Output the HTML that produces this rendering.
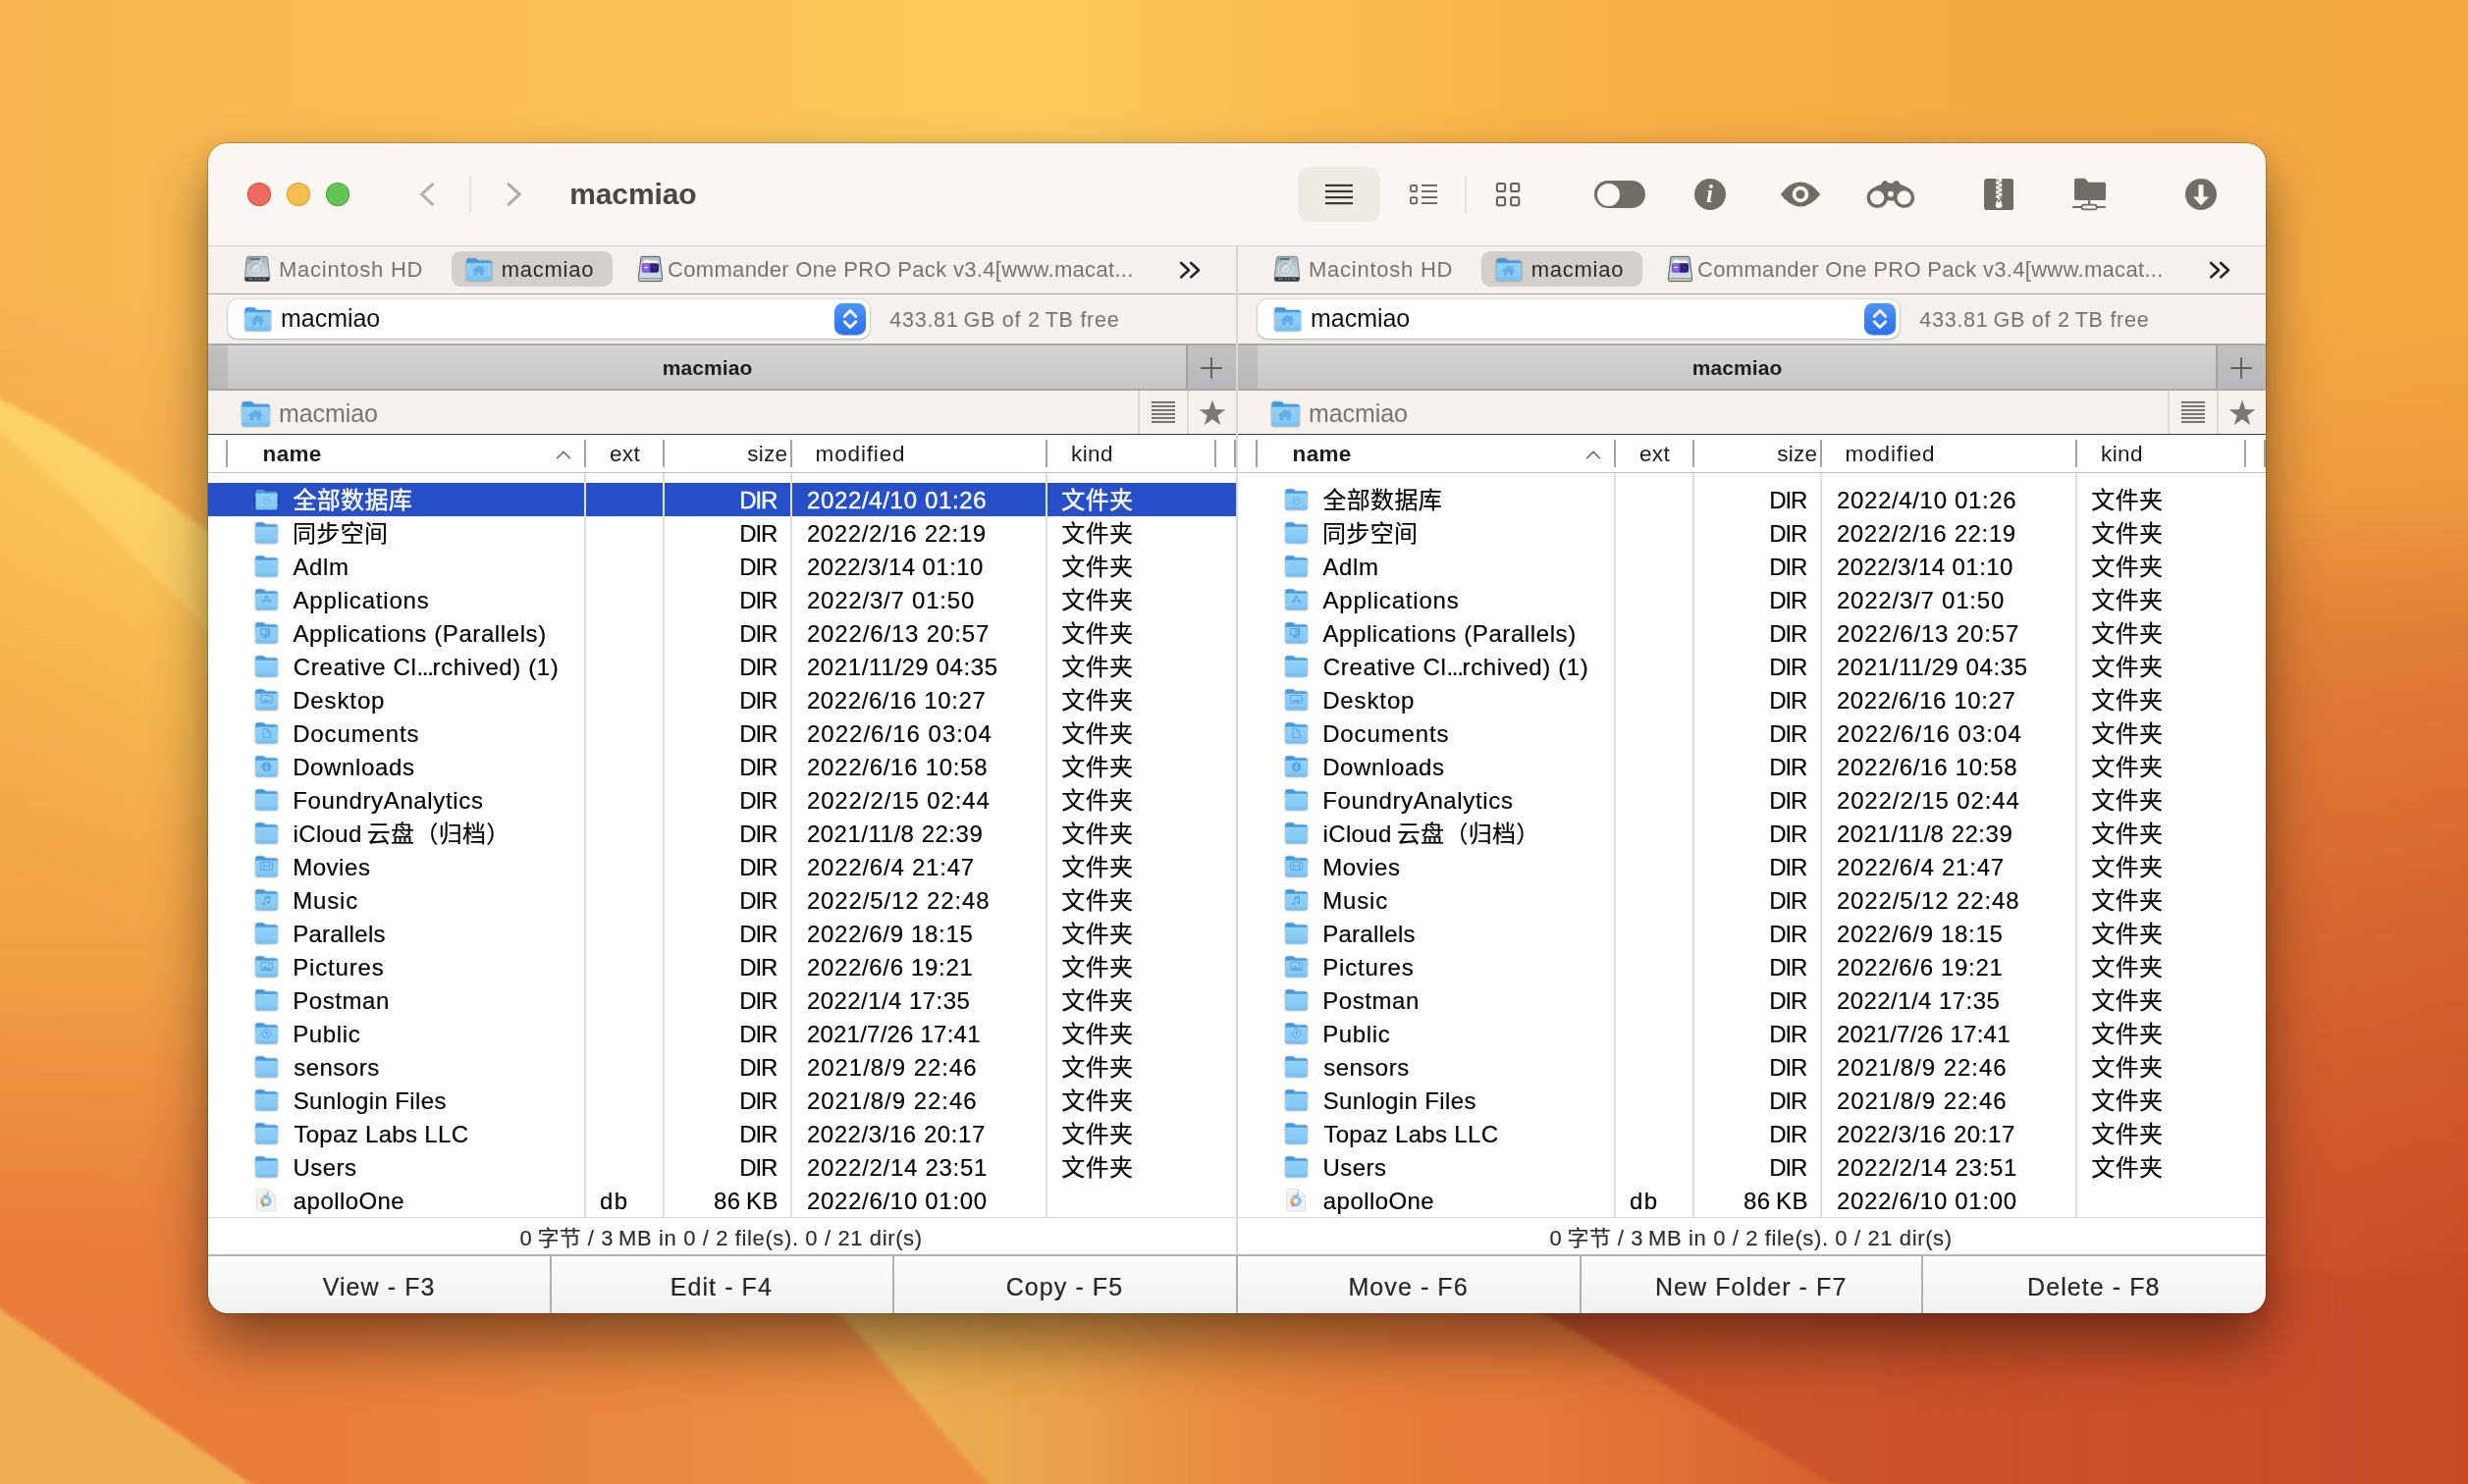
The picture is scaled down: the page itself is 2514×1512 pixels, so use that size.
<!DOCTYPE html>
<html lang="zh-CN"><head><meta charset="utf-8"><title>macmiao</title>
<style>
html,body{margin:0;padding:0;}
body{width:2514px;height:1512px;overflow:hidden;position:relative;background:#e98b3e;
 font-family:"Liberation Sans","Noto Sans CJK SC",sans-serif;}
.b{position:absolute;display:block;}
.t{position:absolute;white-space:nowrap;}
.cj{letter-spacing:0.3px;}
#wall{position:absolute;left:0;top:0;width:2514px;height:1512px;}
#win{position:absolute;left:212px;top:146px;width:2096px;height:1192px;border-radius:20px;
 box-shadow:0 0 0 1px rgba(0,0,0,0.20),0 34px 60px 0 rgba(0,0,0,0.42),0 4px 20px rgba(0,0,0,0.10);}
#clip{position:absolute;left:0;top:0;width:2514px;height:1512px;
 clip-path:inset(146px 206px 174px 212px round 20px);will-change:transform;}
</style></head><body>

<svg id="wall" width="2514" height="1512" viewBox="0 0 2514 1512">
<defs>
<linearGradient id="gTop" x1="0" y1="0" x2="1" y2="0">
 <stop offset="0" stop-color="#f7b450"/><stop offset="0.2" stop-color="#fbbf55"/><stop offset="0.42" stop-color="#fdc95b"/>
 <stop offset="0.62" stop-color="#f8b349"/><stop offset="0.8" stop-color="#f5ab44"/><stop offset="1" stop-color="#f5a842"/>
</linearGradient>
<linearGradient id="gBot" x1="0" y1="0" x2="1" y2="0">
 <stop offset="0" stop-color="#e97c3a"/><stop offset="0.35" stop-color="#e8813c"/><stop offset="0.62" stop-color="#e67a38"/>
 <stop offset="0.78" stop-color="#d25b2d"/><stop offset="1" stop-color="#ca4b28"/>
</linearGradient>
<linearGradient id="gFade" x1="0" y1="0" x2="0" y2="1">
 <stop offset="0" stop-color="#fff"/><stop offset="0.2" stop-color="#fff"/><stop offset="0.33" stop-color="#d9d9d9"/><stop offset="0.4" stop-color="#9e9e9e"/><stop offset="0.47" stop-color="#787878"/><stop offset="0.6" stop-color="#4d4d4d"/><stop offset="0.8" stop-color="#141414"/><stop offset="0.88" stop-color="#000"/><stop offset="1" stop-color="#000"/>
</linearGradient>
<mask id="mFade"><rect width="2514" height="1512" fill="url(#gFade)"/></mask>
<linearGradient id="gPetal" gradientUnits="userSpaceOnUse" x1="100" y1="470" x2="-110" y2="810">
 <stop offset="0" stop-color="#fccf5e" stop-opacity="0.8"/><stop offset="0.3" stop-color="#fbc657" stop-opacity="0.62"/><stop offset="1" stop-color="#f8b850" stop-opacity="0"/>
</linearGradient>
<linearGradient id="gMid" x1="0" y1="0" x2="1" y2="0">
 <stop offset="0" stop-color="#ecb856" stop-opacity="1"/><stop offset="0.4" stop-color="#ebaa4d" stop-opacity="0.8"/><stop offset="1" stop-color="#e8813c" stop-opacity="0"/>
</linearGradient>
<linearGradient id="gRed" x1="0" y1="0" x2="1" y2="0">
 <stop offset="0" stop-color="#c9532b" stop-opacity="0.9"/><stop offset="0.5" stop-color="#c64c28" stop-opacity="0.6"/><stop offset="1" stop-color="#c44827" stop-opacity="0.2"/>
</linearGradient>
<linearGradient id="gLeft" x1="0" y1="0" x2="0" y2="1">
 <stop offset="0" stop-color="#f6b24d" stop-opacity="0.75"/><stop offset="0.4" stop-color="#f4ad4a" stop-opacity="0.82"/><stop offset="0.65" stop-color="#f2a647" stop-opacity="0.8"/><stop offset="1" stop-color="#ee9442" stop-opacity="0"/>
</linearGradient>
<linearGradient id="gLeftX" x1="0" y1="0" x2="1" y2="0"><stop offset="0" stop-color="#fff"/><stop offset="0.45" stop-color="#fff"/><stop offset="1" stop-color="#000"/></linearGradient>
<mask id="mLeft"><rect x="0" y="400" width="520" height="900" fill="url(#gLeftX)"/></mask>
<linearGradient id="gMidL" gradientUnits="userSpaceOnUse" x1="330" y1="0" x2="960" y2="0">
 <stop offset="0" stop-color="#ee9846" stop-opacity="0"/><stop offset="1" stop-color="#ee9846" stop-opacity="0.6"/>
</linearGradient>
<filter id="bl2"><feGaussianBlur stdDeviation="2"/></filter>
</defs>
<rect width="2514" height="1512" fill="url(#gBot)"/>
<rect width="2514" height="1512" fill="url(#gTop)" mask="url(#mFade)"/>
<rect x="0" y="480" width="520" height="780" fill="url(#gLeft)" mask="url(#mLeft)"/>
<path d="M-10,402 Q106,456 240,564 L240,1100 L-10,1100 Z" fill="url(#gPetal)" filter="url(#bl2)"/>
<path d="M-10,403 Q106,457 240,565 L240,672 Q110,534 -10,430 Z" fill="#fee27a" fill-opacity="0.36" filter="url(#bl2)"/>
<polygon points="-10,1329 262,1519 -10,1519" fill="#f0ae51" filter="url(#bl2)"/>
<polygon points="-10,1327 262,1517 262,1521 -10,1331" fill="#f6c068" fill-opacity="0.7" filter="url(#bl2)"/>
<polygon points="330,1296 820,1296 1012,1520 330,1520" fill="url(#gMidL)"/>
<polygon points="820,1296 1012,1520 1500,1520 1380,1296" fill="url(#gMid)" filter="url(#bl2)"/>
<polygon points="1500,1296 1880,1520 2524,1520 2524,1296" fill="url(#gRed)" filter="url(#bl2)"/>
</svg>

<div id="win"></div><div id="clip">
<div class="b" style="left:212px;top:146px;width:2096px;height:1192px;background:#fff;"></div>
<div class="b" style="left:212px;top:146px;width:2096px;height:104px;background:#faf7f2;border-radius:20px 20px 0 0;box-shadow:inset 0 1.2px 0 rgba(255,255,255,0.95);"></div>
<div class="b" style="left:212px;top:250px;width:2096px;height:1px;background:#d6d2cd;"></div>
<div class="b" style="left:252px;top:186px;width:24px;height:24px;border-radius:50%;background:#ed6a5e;box-shadow:inset 0 0 0 1px #d5544a;"></div>
<div class="b" style="left:292px;top:186px;width:24px;height:24px;border-radius:50%;background:#f5bf4f;box-shadow:inset 0 0 0 1px #d9a33c;"></div>
<div class="b" style="left:332px;top:186px;width:24px;height:24px;border-radius:50%;background:#62c554;box-shadow:inset 0 0 0 1px #4fa943;"></div>
<svg class="b" style="left:424px;top:182px;" width="24" height="32" viewBox="0 0 24 32" preserveAspectRatio="none"><path d="M17.6 4.9 L5.6 16 L17.6 27.1" fill="none" stroke="#b4b0aa" stroke-width="3" stroke-linejoin="miter"/></svg>
<div class="b" style="left:477.6px;top:178px;width:2px;height:39px;background:#e7e3dd;"></div>
<svg class="b" style="left:511px;top:182px;" width="24" height="32" viewBox="0 0 24 32" preserveAspectRatio="none"><path d="M6.2 4.9 L18.2 16 L6.2 27.1" fill="none" stroke="#aeaaa4" stroke-width="3" stroke-linejoin="miter"/></svg>
<div class="t" style="top:177.70px;font-size:30px;line-height:39px;color:#494744;letter-spacing:-0.1px;font-weight:700;left:580.20px;">macmiao</div>
<div class="b" style="left:1322px;top:170px;width:84px;height:56px;border-radius:13px;background:#eeeae4;"></div>
<svg class="b" style="left:1348px;top:184px;" width="32" height="28" viewBox="0 0 32 28" preserveAspectRatio="none"><rect x="2" y="3.80" width="28" height="2.2" fill="#3a3835"/><rect x="2" y="9.90" width="28" height="2.2" fill="#3a3835"/><rect x="2" y="16.00" width="28" height="2.2" fill="#3a3835"/><rect x="2" y="22.00" width="28" height="2.2" fill="#3a3835"/></svg>
<svg class="b" style="left:1435px;top:184px;" width="32" height="28" viewBox="0 0 32 28" preserveAspectRatio="none"><rect x="13" y="4.00" width="16" height="1.8" fill="#625d56"/><rect x="13" y="10.10" width="16" height="1.8" fill="#625d56"/><rect x="13" y="16.20" width="16" height="1.8" fill="#625d56"/><rect x="13" y="22.20" width="16" height="1.8" fill="#625d56"/><rect x="1.9" y="4.9" width="6.3" height="6.3" rx="1.5" fill="none" stroke="#625d56" stroke-width="1.7"/><rect x="1.9" y="17.1" width="6.3" height="6.3" rx="1.5" fill="none" stroke="#625d56" stroke-width="1.7"/></svg>
<div class="b" style="left:1492px;top:178px;width:2px;height:39px;background:#e6e2dc;"></div>
<svg class="b" style="left:1523px;top:185px;" width="26" height="26" viewBox="0 0 26 26" preserveAspectRatio="none"><rect x="1.9" y="1.9" width="8.2" height="8.2" rx="1.8" fill="none" stroke="#625d56" stroke-width="2"/><rect x="1.9" y="16.1" width="8.2" height="8.2" rx="1.8" fill="none" stroke="#625d56" stroke-width="2"/><rect x="16.1" y="1.9" width="8.2" height="8.2" rx="1.8" fill="none" stroke="#625d56" stroke-width="2"/><rect x="16.1" y="16.1" width="8.2" height="8.2" rx="1.8" fill="none" stroke="#625d56" stroke-width="2"/></svg>
<div class="b" style="left:1624px;top:184px;width:52px;height:28px;border-radius:14px;background:#716c66;"></div>
<div class="b" style="left:1626.5px;top:186.5px;width:23px;height:23px;border-radius:50%;background:#faf7f2;"></div>
<div class="b" style="left:1726px;top:182px;width:32px;height:32px;border-radius:50%;background:#716c66;"></div>
<div class="t" style="left:1725.6px;top:181.6px;width:32px;text-align:center;font-family:'Liberation Serif',serif;font-style:italic;font-weight:700;font-size:25px;line-height:32px;color:#faf7f2;">i</div>
<svg class="b" style="left:1812px;top:184px;" width="44" height="28" viewBox="0 0 44 28" preserveAspectRatio="none"><path d="M1.8 14 Q11 1.6 22 1.6 Q33 1.6 42.2 14 Q33 26.4 22 26.4 Q11 26.4 1.8 14 Z" fill="#716c66"/><circle cx="22" cy="14" r="8.3" fill="#faf7f2"/><circle cx="22" cy="14" r="4.5" fill="#716c66"/></svg>
<svg class="b" style="left:1900px;top:182px;" width="52" height="32" viewBox="0 0 52 32" preserveAspectRatio="none"><path d="M20.2 1.9 Q22.8 1.9 23.6 4.6 L28.2 4.6 Q29 1.9 31.6 1.9 Q33.6 1.9 34.6 3.8 L35.8 6 Q44 8 49 15 L41 22.4 L11 22.4 L3 15 Q8 8 16.2 6 L17.4 3.8 Q18.4 1.9 20.2 1.9 Z" fill="#716c66"/><circle cx="12.2" cy="19.4" r="10.6" fill="#716c66"/><circle cx="39.6" cy="19.4" r="10.6" fill="#716c66"/><circle cx="12.2" cy="19.4" r="7.1" fill="#faf7f2"/><circle cx="39.6" cy="19.4" r="7.1" fill="#faf7f2"/><circle cx="25.9" cy="15.7" r="2.9" fill="#faf7f2"/></svg>
<svg class="b" style="left:2020.8px;top:181.8px;" width="30.4" height="32.2" viewBox="0 0 30.4 32.2" preserveAspectRatio="none"><rect x="0" y="0" width="30.4" height="32.2" rx="3.4" fill="#716c66"/><rect x="12.2" y="0" width="6" height="20" fill="#faf7f2"/><rect x="10.8" y="1.2" width="4.2" height="1.3" fill="#716c66"/><rect x="15.4" y="3.5999999999999996" width="4.2" height="1.3" fill="#716c66"/><rect x="10.8" y="6.0" width="4.2" height="1.3" fill="#716c66"/><rect x="15.4" y="8.399999999999999" width="4.2" height="1.3" fill="#716c66"/><rect x="10.8" y="10.799999999999999" width="4.2" height="1.3" fill="#716c66"/><rect x="15.4" y="13.2" width="4.2" height="1.3" fill="#716c66"/><rect x="10.8" y="15.599999999999998" width="4.2" height="1.3" fill="#716c66"/><rect x="15.4" y="18.0" width="4.2" height="1.3" fill="#716c66"/><path d="M15.2 19.4 Q12.6 22 11.8 27 Q11.4 30 15.2 30 Q19 30 18.6 27 Q17.8 22 15.2 19.4 Z" fill="#faf7f2"/><circle cx="15.2" cy="22.8" r="1.3" fill="#716c66"/></svg>
<svg class="b" style="left:2110px;top:181px;" width="36" height="34" viewBox="0 0 36 34" preserveAspectRatio="none"><path d="M3 2.4 Q3 0.8 4.6 0.8 L13 0.8 Q13.8 0.8 14.4 1.4 L17.6 4.8 L33.4 4.8 Q35 4.8 35 6.4 L35 21.4 Q35 23 33.4 23 L4.6 23 Q3 23 3 21.4 Z" fill="#716c66"/><rect x="17" y="23" width="2.2" height="6" fill="#716c66"/><rect x="0.8" y="29" width="34.2" height="2" rx="1" fill="#716c66"/><rect x="10.4" y="27.6" width="15.4" height="4.8" rx="2.4" fill="#faf7f2" stroke="#716c66" stroke-width="1.7"/></svg>
<div class="b" style="left:2226px;top:182px;width:32px;height:32px;border-radius:50%;background:#716c66;"></div>
<svg class="b" style="left:2226px;top:182px;" width="32" height="32" viewBox="0 0 32 32" preserveAspectRatio="none"><path d="M13.5 6.2 H18.5 V18.4 H24.2 L16 27.2 L7.8 18.4 H13.5 Z" fill="#faf7f2"/></svg>
<div class="b" style="left:212px;top:251px;width:1047px;height:48px;background:#f5f2ed;"></div>
<div class="b" style="left:212px;top:299px;width:1047px;height:1px;background:#a9a5a1;"></div>
<svg class="b" style="left:249px;top:260.5px;filter:drop-shadow(0 0.5px 0.5px rgba(0,0,0,0.3));overflow:visible;" width="26" height="26" viewBox="0 0 25.6 25.8" preserveAspectRatio="none"><defs><linearGradient id="hdg30" x1="0" y1="0" x2="0.3" y2="1"><stop offset="0" stop-color="#94a6b1"/><stop offset="0.55" stop-color="#b9c6cd"/><stop offset="1" stop-color="#ccd6da"/></linearGradient></defs><path d="M2.4 1.6 Q2.7 0.4 4 0.4 L21.6 0.4 Q22.9 0.4 23.2 1.6 L25.2 20.6 L25.2 23.4 Q25.2 25.4 23.2 25.4 L2.4 25.4 Q0.4 25.4 0.4 23.4 L0.4 20.6 Z" fill="url(#hdg30)" stroke="#6f7d86" stroke-width="0.7"/><path d="M0.5 21.2 L25.1 21.2 L25.1 23.4 Q25.1 25.3 23.2 25.3 L2.4 25.3 Q0.5 25.3 0.5 23.4 Z" fill="#33383b"/><ellipse cx="11.6" cy="12.6" rx="7.8" ry="7.2" fill="none" stroke="#dde5e9" stroke-width="0.9"/><ellipse cx="11.8" cy="12.8" rx="3.4" ry="3.1" fill="#c9d4da" stroke="#e4ebee" stroke-width="0.7"/><path d="M16.6 3.2 Q16.8 7.4 12.6 9.8 Q8.8 12 7.4 15.2" fill="none" stroke="#e9eef0" stroke-width="1.1"/><rect x="5.4" y="1.9" width="10.4" height="1.9" rx="0.6" fill="#5f6c74"/><rect x="4" y="22.4" width="4.4" height="1.3" fill="#7c868b"/><rect x="10.4" y="22.4" width="2" height="1.3" fill="#7c868b"/><rect x="14" y="22.4" width="2" height="1.3" fill="#7c868b"/><rect x="18" y="22.4" width="3.6" height="1.3" fill="#7c868b"/></svg>
<div class="t" style="top:259.58px;font-size:22px;line-height:29px;color:#767370;letter-spacing:0.75px;left:284.00px;">Macintosh HD</div>
<div class="b" style="left:460px;top:256px;width:164px;height:36px;border-radius:9px;background:#d3cfcb;"></div>
<svg class="b" style="left:475px;top:262.5px;filter:drop-shadow(0 0.9px 0.8px rgba(0,0,0,0.42));overflow:visible;" width="26" height="23.5" viewBox="0 0 23 21" preserveAspectRatio="none"><defs><linearGradient id="f33a" x1="0" y1="0" x2="0" y2="1"><stop offset="0" stop-color="#3c92da"/><stop offset="1" stop-color="#56a8e8"/></linearGradient><linearGradient id="f33b" x1="0" y1="0" x2="0" y2="1"><stop offset="0" stop-color="#8dd0f8"/><stop offset="0.78" stop-color="#86caf5"/><stop offset="0.8" stop-color="#7cc2f0"/><stop offset="1" stop-color="#79bfee"/></linearGradient></defs><path d="M0.4 2 Q0.4 0.4 2 0.4 L7.6 0.4 Q8.6 0.4 9.3 1.2 L10.4 2.5 L21 2.5 Q22.6 2.5 22.6 4.1 L22.6 8 L0.4 8 Z" fill="url(#f33a)"/><path d="M0.4 6 Q0.4 4.9 1.6 4.9 L21.4 4.9 Q22.6 4.9 22.6 6 L22.6 19.2 Q22.6 20.6 21.2 20.6 L1.8 20.6 Q0.4 20.6 0.4 19.2 Z" fill="url(#f33b)"/><path d="M0.4 6 Q0.4 4.9 1.6 4.9 L21.4 4.9 Q22.6 4.9 22.6 6" fill="none" stroke="#a6dcfb" stroke-width="0.5"/><path d="M11.2 6.4 L5 11.7 L6.9 11.7 L6.9 15.7 L9.9 15.7 L9.9 12.9 L12.5 12.9 L12.5 15.7 L15.5 15.7 L15.5 11.7 L17.4 11.7 Z" fill="#64abe7"/><rect x="14" y="7" width="1.4" height="2.6" fill="#64abe7"/></svg>
<div class="t" style="top:259.58px;font-size:22px;line-height:29px;color:#2b2a29;letter-spacing:0.72px;left:510.80px;">macmiao</div>
<svg class="b" style="left:649.5px;top:261px;filter:drop-shadow(0 0.5px 0.5px rgba(0,0,0,0.3));overflow:visible;" width="25" height="26" viewBox="0 0 24.6 25.6" preserveAspectRatio="none"><defs><linearGradient id="cmg35" x1="0" y1="0" x2="0" y2="1"><stop offset="0" stop-color="#aebfca"/><stop offset="1" stop-color="#d6e3e9"/></linearGradient></defs><path d="M2.9 1.2 Q3.1 0.4 4 0.4 L20.6 0.4 Q21.5 0.4 21.7 1.2 L24.2 22 L24.2 23.6 Q24.2 25.2 22.6 25.2 L2 25.2 Q0.4 25.2 0.4 23.6 L0.4 22 Z" fill="url(#cmg35)" stroke="#53575c" stroke-width="0.9"/><path d="M0.9 22.6 L23.7 22.6 L23.7 23.5 Q23.7 24.7 22.5 24.7 L2.1 24.7 Q0.9 24.7 0.9 23.5 Z" fill="#cbc8bc"/><path d="M0.8 22.3 H23.8" stroke="#6a6e72" stroke-width="0.7"/><path d="M5 7.4 Q5 3.4 8.6 3.4 Q10.6 3.4 11.6 4.4 L17.6 4.4 Q19.8 4.4 19.8 7.4 Z" fill="#f4f3fb"/><path d="M3.9 9 Q3.9 7.2 5.7 7.2 L12 7.2 L12 16.4 L5.7 16.4 Q3.9 16.4 3.9 14.6 Z" fill="#7a4fe2"/><path d="M12 7.2 L18.9 7.2 Q20.7 7.2 20.7 9 L20.7 14.6 Q20.7 16.4 18.9 16.4 L12 16.4 Z" fill="#291f6f"/><rect x="5.6" y="10.6" width="4.6" height="1.5" rx="0.4" fill="#e9defd"/><rect x="5.6" y="13.4" width="4.6" height="0.9" fill="#a98af0"/><rect x="5.6" y="8.6" width="4.6" height="0.8" fill="#a98af0"/><rect x="13.8" y="10.8" width="4.8" height="0.9" fill="#4a3fa0"/><rect x="13.8" y="8.8" width="4.8" height="0.7" fill="#3a2f8a"/><rect x="13.8" y="13.2" width="4.8" height="0.7" fill="#3a2f8a"/><rect x="21.2" y="23.1" width="1.6" height="1.2" fill="#74d64f"/></svg>
<div class="t" style="top:259.58px;font-size:22px;line-height:29px;color:#767370;letter-spacing:0.31px;left:680.10px;">Commander One PRO Pack v3.4[www.macat...</div>
<svg class="b" style="left:1198px;top:263px;" width="30" height="24" viewBox="0 0 30 24" preserveAspectRatio="none"><path d="M5.2 5 L13 12.2 L5.2 19.4 M15.2 5 L23 12.2 L15.2 19.4" fill="none" stroke="#222" stroke-width="2.6" stroke-linecap="round" stroke-linejoin="round"/></svg>
<div class="b" style="left:212px;top:300px;width:1047px;height:50px;background:#f5f1ed;"></div>
<div class="b" style="left:232px;top:305px;width:654px;height:40px;border-radius:10px;background:#fff;box-shadow:0 0 0 1px rgba(0,0,0,0.07),0 1px 2.5px rgba(0,0,0,0.22);"></div>
<svg class="b" style="left:249px;top:313px;filter:drop-shadow(0 0.9px 0.8px rgba(0,0,0,0.42));overflow:visible;" width="27.5" height="24.6" viewBox="0 0 23 21" preserveAspectRatio="none"><defs><linearGradient id="f40a" x1="0" y1="0" x2="0" y2="1"><stop offset="0" stop-color="#3c92da"/><stop offset="1" stop-color="#56a8e8"/></linearGradient><linearGradient id="f40b" x1="0" y1="0" x2="0" y2="1"><stop offset="0" stop-color="#8dd0f8"/><stop offset="0.78" stop-color="#86caf5"/><stop offset="0.8" stop-color="#7cc2f0"/><stop offset="1" stop-color="#79bfee"/></linearGradient></defs><path d="M0.4 2 Q0.4 0.4 2 0.4 L7.6 0.4 Q8.6 0.4 9.3 1.2 L10.4 2.5 L21 2.5 Q22.6 2.5 22.6 4.1 L22.6 8 L0.4 8 Z" fill="url(#f40a)"/><path d="M0.4 6 Q0.4 4.9 1.6 4.9 L21.4 4.9 Q22.6 4.9 22.6 6 L22.6 19.2 Q22.6 20.6 21.2 20.6 L1.8 20.6 Q0.4 20.6 0.4 19.2 Z" fill="url(#f40b)"/><path d="M0.4 6 Q0.4 4.9 1.6 4.9 L21.4 4.9 Q22.6 4.9 22.6 6" fill="none" stroke="#a6dcfb" stroke-width="0.5"/><path d="M11.2 6.4 L5 11.7 L6.9 11.7 L6.9 15.7 L9.9 15.7 L9.9 12.9 L12.5 12.9 L12.5 15.7 L15.5 15.7 L15.5 11.7 L17.4 11.7 Z" fill="#64abe7"/><rect x="14" y="7" width="1.4" height="2.6" fill="#64abe7"/></svg>
<div class="t" style="top:308.24px;font-size:25px;line-height:32px;color:#111;letter-spacing:-0.03px;left:286.00px;">macmiao</div>
<div class="b" style="left:850px;top:309px;width:32px;height:32px;border-radius:8.5px;background:linear-gradient(#4d95f9,#2a70ee);box-shadow:0 0.5px 1px rgba(0,0,0,0.3);"></div>
<svg class="b" style="left:850px;top:309px;" width="32" height="32" viewBox="0 0 32 32" preserveAspectRatio="none"><path d="M10.2 13.4 L16 7.6 L21.8 13.4 M10.2 18.8 L16 24.6 L21.8 18.8" fill="none" stroke="#fff" stroke-width="2.8" stroke-linecap="round" stroke-linejoin="round"/></svg>
<div class="t" style="top:311.52px;font-size:21.6px;line-height:28px;color:#767370;letter-spacing:0.7px;left:906.30px;">433.81 GB of 2 TB free</div>
<div class="b" style="left:212px;top:350px;width:1047px;height:48px;background:linear-gradient(#d5d4d6,#c8c7c8);"></div>
<div class="b" style="left:212px;top:350px;width:20px;height:48px;background:linear-gradient(#c2c1c2,#b9b8b9);"></div>
<div class="b" style="left:1208px;top:350px;width:51px;height:48px;background:linear-gradient(#c3c2c3,#b8b7b9);border-left:2px solid #a3a2a3;box-sizing:border-box;"></div>
<div class="b" style="left:212px;top:350px;width:1047px;height:1.6px;background:#aaa9aa;"></div>
<div class="b" style="left:212px;top:396px;width:1047px;height:2px;background:#a8a7a8;"></div>
<svg class="b" style="left:1222px;top:363px;" width="24" height="24" viewBox="0 0 24 24" preserveAspectRatio="none"><path d="M1.2 12 H22.8 M12 1.2 V22.8" stroke="#5f5d60" stroke-width="1.9" fill="none"/></svg>
<div class="t" style="top:360.97px;font-size:21px;line-height:27px;color:#1e1e1e;letter-spacing:0.1px;font-weight:700;left:120.60px;width:1200px;text-align:center;">macmiao</div>
<div class="b" style="left:212px;top:398px;width:1047px;height:44px;background:#f5f1ed;"></div>
<div class="b" style="left:1159.2px;top:398px;width:1.6px;height:44px;background:#dcd7d2;"></div>
<div class="b" style="left:1209.2px;top:398px;width:1.6px;height:44px;background:#dcd7d2;"></div>
<div class="b" style="left:212px;top:441.5px;width:1047px;height:1.5px;background:#3c3c3c;"></div>
<svg class="b" style="left:245.5px;top:409px;filter:drop-shadow(0 0.9px 0.8px rgba(0,0,0,0.42));overflow:visible;" width="29" height="26" viewBox="0 0 23 21" preserveAspectRatio="none"><defs><linearGradient id="f56a" x1="0" y1="0" x2="0" y2="1"><stop offset="0" stop-color="#3c92da"/><stop offset="1" stop-color="#56a8e8"/></linearGradient><linearGradient id="f56b" x1="0" y1="0" x2="0" y2="1"><stop offset="0" stop-color="#8dd0f8"/><stop offset="0.78" stop-color="#86caf5"/><stop offset="0.8" stop-color="#7cc2f0"/><stop offset="1" stop-color="#79bfee"/></linearGradient></defs><path d="M0.4 2 Q0.4 0.4 2 0.4 L7.6 0.4 Q8.6 0.4 9.3 1.2 L10.4 2.5 L21 2.5 Q22.6 2.5 22.6 4.1 L22.6 8 L0.4 8 Z" fill="url(#f56a)"/><path d="M0.4 6 Q0.4 4.9 1.6 4.9 L21.4 4.9 Q22.6 4.9 22.6 6 L22.6 19.2 Q22.6 20.6 21.2 20.6 L1.8 20.6 Q0.4 20.6 0.4 19.2 Z" fill="url(#f56b)"/><path d="M0.4 6 Q0.4 4.9 1.6 4.9 L21.4 4.9 Q22.6 4.9 22.6 6" fill="none" stroke="#a6dcfb" stroke-width="0.5"/><path d="M11.2 6.4 L5 11.7 L6.9 11.7 L6.9 15.7 L9.9 15.7 L9.9 12.9 L12.5 12.9 L12.5 15.7 L15.5 15.7 L15.5 11.7 L17.4 11.7 Z" fill="#64abe7"/><rect x="14" y="7" width="1.4" height="2.6" fill="#64abe7"/></svg>
<div class="t" style="top:405.24px;font-size:25px;line-height:32px;color:#777472;letter-spacing:-0.08px;left:284.00px;">macmiao</div>
<svg class="b" style="left:1173px;top:408px;" width="24" height="24" viewBox="0 0 24 24" preserveAspectRatio="none"><rect x="0" y="0.9" width="24" height="2" fill="#726f6c"/><rect x="0" y="4.9" width="24" height="2" fill="#726f6c"/><rect x="0" y="8.9" width="24" height="2" fill="#726f6c"/><rect x="0" y="12.9" width="24" height="2" fill="#726f6c"/><rect x="0" y="16.9" width="24" height="2" fill="#726f6c"/><rect x="0" y="20.9" width="24" height="2" fill="#726f6c"/></svg>
<svg class="b" style="left:1221px;top:407px;" width="28" height="27" viewBox="0 0 28 27" preserveAspectRatio="none"><path d="M14 0.6 L17.3 10.1 L27.4 10.3 L19.3 16.4 L22.3 26 L14 20.3 L5.7 26 L8.7 16.4 L0.6 10.3 L10.7 10.1 Z" fill="#7b7976"/></svg>
<div class="b" style="left:212px;top:443px;width:1047px;height:38px;background:#fff;"></div>
<div class="b" style="left:212px;top:481px;width:1047px;height:1px;background:#c2c2c2;"></div>
<div class="b" style="left:230px;top:448px;width:1.8px;height:28px;background:#a3a3a3;"></div>
<div class="b" style="left:595px;top:448px;width:1.8px;height:28px;background:#a3a3a3;"></div>
<div class="b" style="left:675px;top:448px;width:1.8px;height:28px;background:#a3a3a3;"></div>
<div class="b" style="left:805px;top:448px;width:1.8px;height:28px;background:#a3a3a3;"></div>
<div class="b" style="left:1065px;top:448px;width:1.8px;height:28px;background:#a3a3a3;"></div>
<div class="b" style="left:1237px;top:448px;width:1.8px;height:28px;background:#a3a3a3;"></div>
<div class="b" style="left:1257px;top:448px;width:1.8px;height:28px;background:#a3a3a3;"></div>
<div class="t" style="top:447.55px;font-size:22.5px;line-height:29px;color:#1c1c1c;letter-spacing:0.3px;font-weight:700;left:267.60px;">name</div>
<svg class="b" style="left:565px;top:457px;" width="18" height="12" viewBox="0 0 18 12" preserveAspectRatio="none"><path d="M2.6 9.8 L9 3.4 L15.4 9.8" fill="none" stroke="#6b6b6b" stroke-width="1.6" stroke-linecap="round" stroke-linejoin="round"/></svg>
<div class="t" style="top:447.55px;font-size:22.5px;line-height:29px;color:#1c1c1c;letter-spacing:0.35px;left:621.00px;">ext</div>
<div class="t" style="top:447.55px;font-size:22.5px;line-height:29px;color:#1c1c1c;letter-spacing:0.3px;right:1711.60px;">size</div>
<div class="t" style="top:447.55px;font-size:22.5px;line-height:29px;color:#1c1c1c;letter-spacing:0.85px;left:830.60px;">modified</div>
<div class="t" style="top:447.55px;font-size:22.5px;line-height:29px;color:#1c1c1c;letter-spacing:0.4px;left:1091.00px;">kind</div>
<div class="b" style="left:212px;top:482px;width:1047px;height:759px;background:#fff;"></div>
<div class="b" style="left:595px;top:482px;width:1.5px;height:758px;background:#dfdfdf;"></div>
<div class="b" style="left:675px;top:482px;width:1.5px;height:758px;background:#dfdfdf;"></div>
<div class="b" style="left:805px;top:482px;width:1.5px;height:758px;background:#dfdfdf;"></div>
<div class="b" style="left:1065px;top:482px;width:1.5px;height:758px;background:#dfdfdf;"></div>
<div class="b" style="left:212px;top:492px;width:1047px;height:34px;background:#264fc8;"></div>
<div class="b" style="left:595px;top:492px;width:1.5px;height:34px;background:#dfe4f4;"></div>
<div class="b" style="left:675px;top:492px;width:1.5px;height:34px;background:#dfe4f4;"></div>
<div class="b" style="left:805px;top:492px;width:1.5px;height:34px;background:#dfe4f4;"></div>
<div class="b" style="left:1065px;top:492px;width:1.5px;height:34px;background:#dfe4f4;"></div>
<svg class="b" style="left:259.7px;top:498.3px;filter:drop-shadow(0 0.9px 0.8px rgba(0,0,0,0.42));overflow:visible;" width="23.0" height="21.9" viewBox="0 0 23 21" preserveAspectRatio="none"><defs><linearGradient id="f85a" x1="0" y1="0" x2="0" y2="1"><stop offset="0" stop-color="#3c92da"/><stop offset="1" stop-color="#56a8e8"/></linearGradient><linearGradient id="f85b" x1="0" y1="0" x2="0" y2="1"><stop offset="0" stop-color="#8dd0f8"/><stop offset="0.78" stop-color="#86caf5"/><stop offset="0.8" stop-color="#7cc2f0"/><stop offset="1" stop-color="#79bfee"/></linearGradient></defs><path d="M0.4 2 Q0.4 0.4 2 0.4 L7.6 0.4 Q8.6 0.4 9.3 1.2 L10.4 2.5 L21 2.5 Q22.6 2.5 22.6 4.1 L22.6 8 L0.4 8 Z" fill="url(#f85a)"/><path d="M0.4 6 Q0.4 4.9 1.6 4.9 L21.4 4.9 Q22.6 4.9 22.6 6 L22.6 19.2 Q22.6 20.6 21.2 20.6 L1.8 20.6 Q0.4 20.6 0.4 19.2 Z" fill="url(#f85b)"/><path d="M0.4 6 Q0.4 4.9 1.6 4.9 L21.4 4.9 Q22.6 4.9 22.6 6" fill="none" stroke="#a6dcfb" stroke-width="0.5"/><path d="M8 12a3.6 3.6 0 1 1 3.6 3.4a2.3 2.3 0 1 1 2.2-2.6" fill="none" stroke="#6db6ea" stroke-width="1"/></svg>
<div class="t" style="top:492.78px;font-size:24px;line-height:34px;color:#fff;letter-spacing:0.35px;left:298.41px;-webkit-text-stroke:0.4px #fff;">全部数据库</div>
<div class="t" style="top:492.78px;font-size:24px;line-height:34px;color:#fff;letter-spacing:-1.1px;right:1722.70px;-webkit-text-stroke:0.4px #fff;">DIR</div>
<div class="t" style="top:492.78px;font-size:24px;line-height:34px;color:#fff;letter-spacing:0.665px;left:821.90px;-webkit-text-stroke:0.4px #fff;">2022/4/10 01:26</div>
<div class="t" style="top:492.78px;font-size:24px;line-height:34px;color:#fff;letter-spacing:0.35px;left:1081.30px;-webkit-text-stroke:0.4px #fff;">文件夹</div>
<svg class="b" style="left:259.7px;top:532.3px;filter:drop-shadow(0 0.9px 0.8px rgba(0,0,0,0.42));overflow:visible;" width="23.0" height="21.9" viewBox="0 0 23 21" preserveAspectRatio="none"><defs><linearGradient id="f90a" x1="0" y1="0" x2="0" y2="1"><stop offset="0" stop-color="#3c92da"/><stop offset="1" stop-color="#56a8e8"/></linearGradient><linearGradient id="f90b" x1="0" y1="0" x2="0" y2="1"><stop offset="0" stop-color="#8dd0f8"/><stop offset="0.78" stop-color="#86caf5"/><stop offset="0.8" stop-color="#7cc2f0"/><stop offset="1" stop-color="#79bfee"/></linearGradient></defs><path d="M0.4 2 Q0.4 0.4 2 0.4 L7.6 0.4 Q8.6 0.4 9.3 1.2 L10.4 2.5 L21 2.5 Q22.6 2.5 22.6 4.1 L22.6 8 L0.4 8 Z" fill="url(#f90a)"/><path d="M0.4 6 Q0.4 4.9 1.6 4.9 L21.4 4.9 Q22.6 4.9 22.6 6 L22.6 19.2 Q22.6 20.6 21.2 20.6 L1.8 20.6 Q0.4 20.6 0.4 19.2 Z" fill="url(#f90b)"/><path d="M0.4 6 Q0.4 4.9 1.6 4.9 L21.4 4.9 Q22.6 4.9 22.6 6" fill="none" stroke="#a6dcfb" stroke-width="0.5"/></svg>
<div class="t" style="top:526.78px;font-size:24px;line-height:34px;color:#000;letter-spacing:0.35px;left:297.98px;-webkit-text-stroke:0.18px #000;">同步空间</div>
<div class="t" style="top:526.78px;font-size:24px;line-height:34px;color:#000;letter-spacing:-1.1px;right:1722.70px;-webkit-text-stroke:0.18px #000;">DIR</div>
<div class="t" style="top:526.78px;font-size:24px;line-height:34px;color:#000;letter-spacing:0.63px;left:821.90px;-webkit-text-stroke:0.18px #000;">2022/2/16 22:19</div>
<div class="t" style="top:526.78px;font-size:24px;line-height:34px;color:#000;letter-spacing:0.35px;left:1081.30px;-webkit-text-stroke:0.18px #000;">文件夹</div>
<svg class="b" style="left:259.7px;top:566.3px;filter:drop-shadow(0 0.9px 0.8px rgba(0,0,0,0.42));overflow:visible;" width="23.0" height="21.9" viewBox="0 0 23 21" preserveAspectRatio="none"><defs><linearGradient id="f95a" x1="0" y1="0" x2="0" y2="1"><stop offset="0" stop-color="#3c92da"/><stop offset="1" stop-color="#56a8e8"/></linearGradient><linearGradient id="f95b" x1="0" y1="0" x2="0" y2="1"><stop offset="0" stop-color="#8dd0f8"/><stop offset="0.78" stop-color="#86caf5"/><stop offset="0.8" stop-color="#7cc2f0"/><stop offset="1" stop-color="#79bfee"/></linearGradient></defs><path d="M0.4 2 Q0.4 0.4 2 0.4 L7.6 0.4 Q8.6 0.4 9.3 1.2 L10.4 2.5 L21 2.5 Q22.6 2.5 22.6 4.1 L22.6 8 L0.4 8 Z" fill="url(#f95a)"/><path d="M0.4 6 Q0.4 4.9 1.6 4.9 L21.4 4.9 Q22.6 4.9 22.6 6 L22.6 19.2 Q22.6 20.6 21.2 20.6 L1.8 20.6 Q0.4 20.6 0.4 19.2 Z" fill="url(#f95b)"/><path d="M0.4 6 Q0.4 4.9 1.6 4.9 L21.4 4.9 Q22.6 4.9 22.6 6" fill="none" stroke="#a6dcfb" stroke-width="0.5"/></svg>
<div class="t" style="top:560.78px;font-size:24px;line-height:34px;color:#000;letter-spacing:0.596px;left:298.45px;-webkit-text-stroke:0.18px #000;">Adlm</div>
<div class="t" style="top:560.78px;font-size:24px;line-height:34px;color:#000;letter-spacing:-1.1px;right:1722.70px;-webkit-text-stroke:0.18px #000;">DIR</div>
<div class="t" style="top:560.78px;font-size:24px;line-height:34px;color:#000;letter-spacing:0.427px;left:821.90px;-webkit-text-stroke:0.18px #000;">2022/3/14 01:10</div>
<div class="t" style="top:560.78px;font-size:24px;line-height:34px;color:#000;letter-spacing:0.35px;left:1081.30px;-webkit-text-stroke:0.18px #000;">文件夹</div>
<svg class="b" style="left:259.7px;top:600.3px;filter:drop-shadow(0 0.9px 0.8px rgba(0,0,0,0.42));overflow:visible;" width="23.0" height="21.9" viewBox="0 0 23 21" preserveAspectRatio="none"><defs><linearGradient id="f100a" x1="0" y1="0" x2="0" y2="1"><stop offset="0" stop-color="#3c92da"/><stop offset="1" stop-color="#56a8e8"/></linearGradient><linearGradient id="f100b" x1="0" y1="0" x2="0" y2="1"><stop offset="0" stop-color="#8dd0f8"/><stop offset="0.78" stop-color="#86caf5"/><stop offset="0.8" stop-color="#7cc2f0"/><stop offset="1" stop-color="#79bfee"/></linearGradient></defs><path d="M0.4 2 Q0.4 0.4 2 0.4 L7.6 0.4 Q8.6 0.4 9.3 1.2 L10.4 2.5 L21 2.5 Q22.6 2.5 22.6 4.1 L22.6 8 L0.4 8 Z" fill="url(#f100a)"/><path d="M0.4 6 Q0.4 4.9 1.6 4.9 L21.4 4.9 Q22.6 4.9 22.6 6 L22.6 19.2 Q22.6 20.6 21.2 20.6 L1.8 20.6 Q0.4 20.6 0.4 19.2 Z" fill="url(#f100b)"/><path d="M0.4 6 Q0.4 4.9 1.6 4.9 L21.4 4.9 Q22.6 4.9 22.6 6" fill="none" stroke="#a6dcfb" stroke-width="0.5"/><path d="M11.6 6.6 L8 13.6 M11.6 6.6 L15.2 13.6 M6.6 11.8 L16.6 11.8" stroke="#58a5e3" stroke-width="1.1" fill="none" stroke-linecap="round"/></svg>
<div class="t" style="top:594.78px;font-size:24px;line-height:34px;color:#000;letter-spacing:0.812px;left:298.45px;-webkit-text-stroke:0.18px #000;">Applications</div>
<div class="t" style="top:594.78px;font-size:24px;line-height:34px;color:#000;letter-spacing:-1.1px;right:1722.70px;-webkit-text-stroke:0.18px #000;">DIR</div>
<div class="t" style="top:594.78px;font-size:24px;line-height:34px;color:#000;letter-spacing:0.79px;left:821.90px;-webkit-text-stroke:0.18px #000;">2022/3/7 01:50</div>
<div class="t" style="top:594.78px;font-size:24px;line-height:34px;color:#000;letter-spacing:0.35px;left:1081.30px;-webkit-text-stroke:0.18px #000;">文件夹</div>
<svg class="b" style="left:259.7px;top:634.3px;filter:drop-shadow(0 0.9px 0.8px rgba(0,0,0,0.42));overflow:visible;" width="23.0" height="21.9" viewBox="0 0 23 21" preserveAspectRatio="none"><defs><linearGradient id="f105a" x1="0" y1="0" x2="0" y2="1"><stop offset="0" stop-color="#3c92da"/><stop offset="1" stop-color="#56a8e8"/></linearGradient><linearGradient id="f105b" x1="0" y1="0" x2="0" y2="1"><stop offset="0" stop-color="#8dd0f8"/><stop offset="0.78" stop-color="#86caf5"/><stop offset="0.8" stop-color="#7cc2f0"/><stop offset="1" stop-color="#79bfee"/></linearGradient></defs><path d="M0.4 2 Q0.4 0.4 2 0.4 L7.6 0.4 Q8.6 0.4 9.3 1.2 L10.4 2.5 L21 2.5 Q22.6 2.5 22.6 4.1 L22.6 8 L0.4 8 Z" fill="url(#f105a)"/><path d="M0.4 6 Q0.4 4.9 1.6 4.9 L21.4 4.9 Q22.6 4.9 22.6 6 L22.6 19.2 Q22.6 20.6 21.2 20.6 L1.8 20.6 Q0.4 20.6 0.4 19.2 Z" fill="url(#f105b)"/><path d="M0.4 6 Q0.4 4.9 1.6 4.9 L21.4 4.9 Q22.6 4.9 22.6 6" fill="none" stroke="#a6dcfb" stroke-width="0.5"/><rect x="5.6" y="6.4" width="9" height="6" rx="0.6" fill="none" stroke="#58a5e3" stroke-width="1.2"/><path d="M11.2 5.6V15M13.6 5.6V15M7.4 14.8H12.4M9.9 12.6V14.6" stroke="#58a5e3" stroke-width="1.15"/></svg>
<div class="t" style="top:628.78px;font-size:24px;line-height:34px;color:#000;letter-spacing:0.591px;left:298.45px;-webkit-text-stroke:0.18px #000;">Applications (Parallels)</div>
<div class="t" style="top:628.78px;font-size:24px;line-height:34px;color:#000;letter-spacing:-1.1px;right:1722.70px;-webkit-text-stroke:0.18px #000;">DIR</div>
<div class="t" style="top:628.78px;font-size:24px;line-height:34px;color:#000;letter-spacing:0.847px;left:821.90px;-webkit-text-stroke:0.18px #000;">2022/6/13 20:57</div>
<div class="t" style="top:628.78px;font-size:24px;line-height:34px;color:#000;letter-spacing:0.35px;left:1081.30px;-webkit-text-stroke:0.18px #000;">文件夹</div>
<svg class="b" style="left:259.7px;top:668.3px;filter:drop-shadow(0 0.9px 0.8px rgba(0,0,0,0.42));overflow:visible;" width="23.0" height="21.9" viewBox="0 0 23 21" preserveAspectRatio="none"><defs><linearGradient id="f110a" x1="0" y1="0" x2="0" y2="1"><stop offset="0" stop-color="#3c92da"/><stop offset="1" stop-color="#56a8e8"/></linearGradient><linearGradient id="f110b" x1="0" y1="0" x2="0" y2="1"><stop offset="0" stop-color="#8dd0f8"/><stop offset="0.78" stop-color="#86caf5"/><stop offset="0.8" stop-color="#7cc2f0"/><stop offset="1" stop-color="#79bfee"/></linearGradient></defs><path d="M0.4 2 Q0.4 0.4 2 0.4 L7.6 0.4 Q8.6 0.4 9.3 1.2 L10.4 2.5 L21 2.5 Q22.6 2.5 22.6 4.1 L22.6 8 L0.4 8 Z" fill="url(#f110a)"/><path d="M0.4 6 Q0.4 4.9 1.6 4.9 L21.4 4.9 Q22.6 4.9 22.6 6 L22.6 19.2 Q22.6 20.6 21.2 20.6 L1.8 20.6 Q0.4 20.6 0.4 19.2 Z" fill="url(#f110b)"/><path d="M0.4 6 Q0.4 4.9 1.6 4.9 L21.4 4.9 Q22.6 4.9 22.6 6" fill="none" stroke="#a6dcfb" stroke-width="0.5"/></svg>
<div class="t" style="top:662.78px;font-size:24px;line-height:34px;color:#000;letter-spacing:0.627px;left:298.86px;-webkit-text-stroke:0.18px #000;">Creative Cl<span style="letter-spacing:-1.3px">...</span>rchived) (1)</div>
<div class="t" style="top:662.78px;font-size:24px;line-height:34px;color:#000;letter-spacing:-1.1px;right:1722.70px;-webkit-text-stroke:0.18px #000;">DIR</div>
<div class="t" style="top:662.78px;font-size:24px;line-height:34px;color:#000;letter-spacing:0.61px;left:821.90px;-webkit-text-stroke:0.18px #000;">2021/11/29 04:35</div>
<div class="t" style="top:662.78px;font-size:24px;line-height:34px;color:#000;letter-spacing:0.35px;left:1081.30px;-webkit-text-stroke:0.18px #000;">文件夹</div>
<svg class="b" style="left:259.7px;top:702.3px;filter:drop-shadow(0 0.9px 0.8px rgba(0,0,0,0.42));overflow:visible;" width="23.0" height="21.9" viewBox="0 0 23 21" preserveAspectRatio="none"><defs><linearGradient id="f115a" x1="0" y1="0" x2="0" y2="1"><stop offset="0" stop-color="#3c92da"/><stop offset="1" stop-color="#56a8e8"/></linearGradient><linearGradient id="f115b" x1="0" y1="0" x2="0" y2="1"><stop offset="0" stop-color="#8dd0f8"/><stop offset="0.78" stop-color="#86caf5"/><stop offset="0.8" stop-color="#7cc2f0"/><stop offset="1" stop-color="#79bfee"/></linearGradient></defs><path d="M0.4 2 Q0.4 0.4 2 0.4 L7.6 0.4 Q8.6 0.4 9.3 1.2 L10.4 2.5 L21 2.5 Q22.6 2.5 22.6 4.1 L22.6 8 L0.4 8 Z" fill="url(#f115a)"/><path d="M0.4 6 Q0.4 4.9 1.6 4.9 L21.4 4.9 Q22.6 4.9 22.6 6 L22.6 19.2 Q22.6 20.6 21.2 20.6 L1.8 20.6 Q0.4 20.6 0.4 19.2 Z" fill="url(#f115b)"/><path d="M0.4 6 Q0.4 4.9 1.6 4.9 L21.4 4.9 Q22.6 4.9 22.6 6" fill="none" stroke="#a6dcfb" stroke-width="0.5"/><rect x="5.8" y="6.3" width="11.4" height="7.4" rx="1.2" fill="none" stroke="#58a5e3" stroke-width="1"/><rect x="8.2" y="11" width="6.6" height="1.5" fill="#58a5e3"/></svg>
<div class="t" style="top:696.78px;font-size:24px;line-height:34px;color:#000;letter-spacing:0.881px;left:298.14px;-webkit-text-stroke:0.18px #000;">Desktop</div>
<div class="t" style="top:696.78px;font-size:24px;line-height:34px;color:#000;letter-spacing:-1.1px;right:1722.70px;-webkit-text-stroke:0.18px #000;">DIR</div>
<div class="t" style="top:696.78px;font-size:24px;line-height:34px;color:#000;letter-spacing:0.596px;left:821.90px;-webkit-text-stroke:0.18px #000;">2022/6/16 10:27</div>
<div class="t" style="top:696.78px;font-size:24px;line-height:34px;color:#000;letter-spacing:0.35px;left:1081.30px;-webkit-text-stroke:0.18px #000;">文件夹</div>
<svg class="b" style="left:259.7px;top:736.3px;filter:drop-shadow(0 0.9px 0.8px rgba(0,0,0,0.42));overflow:visible;" width="23.0" height="21.9" viewBox="0 0 23 21" preserveAspectRatio="none"><defs><linearGradient id="f120a" x1="0" y1="0" x2="0" y2="1"><stop offset="0" stop-color="#3c92da"/><stop offset="1" stop-color="#56a8e8"/></linearGradient><linearGradient id="f120b" x1="0" y1="0" x2="0" y2="1"><stop offset="0" stop-color="#8dd0f8"/><stop offset="0.78" stop-color="#86caf5"/><stop offset="0.8" stop-color="#7cc2f0"/><stop offset="1" stop-color="#79bfee"/></linearGradient></defs><path d="M0.4 2 Q0.4 0.4 2 0.4 L7.6 0.4 Q8.6 0.4 9.3 1.2 L10.4 2.5 L21 2.5 Q22.6 2.5 22.6 4.1 L22.6 8 L0.4 8 Z" fill="url(#f120a)"/><path d="M0.4 6 Q0.4 4.9 1.6 4.9 L21.4 4.9 Q22.6 4.9 22.6 6 L22.6 19.2 Q22.6 20.6 21.2 20.6 L1.8 20.6 Q0.4 20.6 0.4 19.2 Z" fill="url(#f120b)"/><path d="M0.4 6 Q0.4 4.9 1.6 4.9 L21.4 4.9 Q22.6 4.9 22.6 6" fill="none" stroke="#a6dcfb" stroke-width="0.5"/><path d="M8 6.4 H12.4 L15.2 9.2 V15 H8 Z M12.2 6.6 V9.4 H15" fill="none" stroke="#58a5e3" stroke-width="0.95"/></svg>
<div class="t" style="top:730.78px;font-size:24px;line-height:34px;color:#000;letter-spacing:0.874px;left:298.14px;-webkit-text-stroke:0.18px #000;">Documents</div>
<div class="t" style="top:730.78px;font-size:24px;line-height:34px;color:#000;letter-spacing:-1.1px;right:1722.70px;-webkit-text-stroke:0.18px #000;">DIR</div>
<div class="t" style="top:730.78px;font-size:24px;line-height:34px;color:#000;letter-spacing:1.028px;left:821.90px;-webkit-text-stroke:0.18px #000;">2022/6/16 03:04</div>
<div class="t" style="top:730.78px;font-size:24px;line-height:34px;color:#000;letter-spacing:0.35px;left:1081.30px;-webkit-text-stroke:0.18px #000;">文件夹</div>
<svg class="b" style="left:259.7px;top:770.3px;filter:drop-shadow(0 0.9px 0.8px rgba(0,0,0,0.42));overflow:visible;" width="23.0" height="21.9" viewBox="0 0 23 21" preserveAspectRatio="none"><defs><linearGradient id="f125a" x1="0" y1="0" x2="0" y2="1"><stop offset="0" stop-color="#3c92da"/><stop offset="1" stop-color="#56a8e8"/></linearGradient><linearGradient id="f125b" x1="0" y1="0" x2="0" y2="1"><stop offset="0" stop-color="#8dd0f8"/><stop offset="0.78" stop-color="#86caf5"/><stop offset="0.8" stop-color="#7cc2f0"/><stop offset="1" stop-color="#79bfee"/></linearGradient></defs><path d="M0.4 2 Q0.4 0.4 2 0.4 L7.6 0.4 Q8.6 0.4 9.3 1.2 L10.4 2.5 L21 2.5 Q22.6 2.5 22.6 4.1 L22.6 8 L0.4 8 Z" fill="url(#f125a)"/><path d="M0.4 6 Q0.4 4.9 1.6 4.9 L21.4 4.9 Q22.6 4.9 22.6 6 L22.6 19.2 Q22.6 20.6 21.2 20.6 L1.8 20.6 Q0.4 20.6 0.4 19.2 Z" fill="url(#f125b)"/><path d="M0.4 6 Q0.4 4.9 1.6 4.9 L21.4 4.9 Q22.6 4.9 22.6 6" fill="none" stroke="#a6dcfb" stroke-width="0.5"/><circle cx="11.6" cy="10.8" r="4.8" fill="#58a5e3"/><path d="M11.6 8V13M9.6 11.2 L11.6 13.2 L13.6 11.2" stroke="#8ccdf6" stroke-width="1.2" fill="none"/></svg>
<div class="t" style="top:764.78px;font-size:24px;line-height:34px;color:#000;letter-spacing:0.635px;left:298.14px;-webkit-text-stroke:0.18px #000;">Downloads</div>
<div class="t" style="top:764.78px;font-size:24px;line-height:34px;color:#000;letter-spacing:-1.1px;right:1722.70px;-webkit-text-stroke:0.18px #000;">DIR</div>
<div class="t" style="top:764.78px;font-size:24px;line-height:34px;color:#000;letter-spacing:0.737px;left:821.90px;-webkit-text-stroke:0.18px #000;">2022/6/16 10:58</div>
<div class="t" style="top:764.78px;font-size:24px;line-height:34px;color:#000;letter-spacing:0.35px;left:1081.30px;-webkit-text-stroke:0.18px #000;">文件夹</div>
<svg class="b" style="left:259.7px;top:804.3px;filter:drop-shadow(0 0.9px 0.8px rgba(0,0,0,0.42));overflow:visible;" width="23.0" height="21.9" viewBox="0 0 23 21" preserveAspectRatio="none"><defs><linearGradient id="f130a" x1="0" y1="0" x2="0" y2="1"><stop offset="0" stop-color="#3c92da"/><stop offset="1" stop-color="#56a8e8"/></linearGradient><linearGradient id="f130b" x1="0" y1="0" x2="0" y2="1"><stop offset="0" stop-color="#8dd0f8"/><stop offset="0.78" stop-color="#86caf5"/><stop offset="0.8" stop-color="#7cc2f0"/><stop offset="1" stop-color="#79bfee"/></linearGradient></defs><path d="M0.4 2 Q0.4 0.4 2 0.4 L7.6 0.4 Q8.6 0.4 9.3 1.2 L10.4 2.5 L21 2.5 Q22.6 2.5 22.6 4.1 L22.6 8 L0.4 8 Z" fill="url(#f130a)"/><path d="M0.4 6 Q0.4 4.9 1.6 4.9 L21.4 4.9 Q22.6 4.9 22.6 6 L22.6 19.2 Q22.6 20.6 21.2 20.6 L1.8 20.6 Q0.4 20.6 0.4 19.2 Z" fill="url(#f130b)"/><path d="M0.4 6 Q0.4 4.9 1.6 4.9 L21.4 4.9 Q22.6 4.9 22.6 6" fill="none" stroke="#a6dcfb" stroke-width="0.5"/></svg>
<div class="t" style="top:798.78px;font-size:24px;line-height:34px;color:#000;letter-spacing:0.65px;left:298.14px;-webkit-text-stroke:0.18px #000;">FoundryAnalytics</div>
<div class="t" style="top:798.78px;font-size:24px;line-height:34px;color:#000;letter-spacing:-1.1px;right:1722.70px;-webkit-text-stroke:0.18px #000;">DIR</div>
<div class="t" style="top:798.78px;font-size:24px;line-height:34px;color:#000;letter-spacing:0.891px;left:821.90px;-webkit-text-stroke:0.18px #000;">2022/2/15 02:44</div>
<div class="t" style="top:798.78px;font-size:24px;line-height:34px;color:#000;letter-spacing:0.35px;left:1081.30px;-webkit-text-stroke:0.18px #000;">文件夹</div>
<svg class="b" style="left:259.7px;top:838.3px;filter:drop-shadow(0 0.9px 0.8px rgba(0,0,0,0.42));overflow:visible;" width="23.0" height="21.9" viewBox="0 0 23 21" preserveAspectRatio="none"><defs><linearGradient id="f135a" x1="0" y1="0" x2="0" y2="1"><stop offset="0" stop-color="#3c92da"/><stop offset="1" stop-color="#56a8e8"/></linearGradient><linearGradient id="f135b" x1="0" y1="0" x2="0" y2="1"><stop offset="0" stop-color="#8dd0f8"/><stop offset="0.78" stop-color="#86caf5"/><stop offset="0.8" stop-color="#7cc2f0"/><stop offset="1" stop-color="#79bfee"/></linearGradient></defs><path d="M0.4 2 Q0.4 0.4 2 0.4 L7.6 0.4 Q8.6 0.4 9.3 1.2 L10.4 2.5 L21 2.5 Q22.6 2.5 22.6 4.1 L22.6 8 L0.4 8 Z" fill="url(#f135a)"/><path d="M0.4 6 Q0.4 4.9 1.6 4.9 L21.4 4.9 Q22.6 4.9 22.6 6 L22.6 19.2 Q22.6 20.6 21.2 20.6 L1.8 20.6 Q0.4 20.6 0.4 19.2 Z" fill="url(#f135b)"/><path d="M0.4 6 Q0.4 4.9 1.6 4.9 L21.4 4.9 Q22.6 4.9 22.6 6" fill="none" stroke="#a6dcfb" stroke-width="0.5"/></svg>
<div class="t" style="top:832.78px;font-size:24px;line-height:34px;color:#000;letter-spacing:0.7px;left:298.59px;-webkit-text-stroke:0.18px #000;"><span style="letter-spacing:0.35px">iCloud</span><span style="letter-spacing:-1.6px"> </span><span class="cj">云盘（归档）</span></div>
<div class="t" style="top:832.78px;font-size:24px;line-height:34px;color:#000;letter-spacing:-1.1px;right:1722.70px;-webkit-text-stroke:0.18px #000;">DIR</div>
<div class="t" style="top:832.78px;font-size:24px;line-height:34px;color:#000;letter-spacing:0.51px;left:821.90px;-webkit-text-stroke:0.18px #000;">2021/11/8 22:39</div>
<div class="t" style="top:832.78px;font-size:24px;line-height:34px;color:#000;letter-spacing:0.35px;left:1081.30px;-webkit-text-stroke:0.18px #000;">文件夹</div>
<svg class="b" style="left:259.7px;top:872.3px;filter:drop-shadow(0 0.9px 0.8px rgba(0,0,0,0.42));overflow:visible;" width="23.0" height="21.9" viewBox="0 0 23 21" preserveAspectRatio="none"><defs><linearGradient id="f140a" x1="0" y1="0" x2="0" y2="1"><stop offset="0" stop-color="#3c92da"/><stop offset="1" stop-color="#56a8e8"/></linearGradient><linearGradient id="f140b" x1="0" y1="0" x2="0" y2="1"><stop offset="0" stop-color="#8dd0f8"/><stop offset="0.78" stop-color="#86caf5"/><stop offset="0.8" stop-color="#7cc2f0"/><stop offset="1" stop-color="#79bfee"/></linearGradient></defs><path d="M0.4 2 Q0.4 0.4 2 0.4 L7.6 0.4 Q8.6 0.4 9.3 1.2 L10.4 2.5 L21 2.5 Q22.6 2.5 22.6 4.1 L22.6 8 L0.4 8 Z" fill="url(#f140a)"/><path d="M0.4 6 Q0.4 4.9 1.6 4.9 L21.4 4.9 Q22.6 4.9 22.6 6 L22.6 19.2 Q22.6 20.6 21.2 20.6 L1.8 20.6 Q0.4 20.6 0.4 19.2 Z" fill="url(#f140b)"/><path d="M0.4 6 Q0.4 4.9 1.6 4.9 L21.4 4.9 Q22.6 4.9 22.6 6" fill="none" stroke="#a6dcfb" stroke-width="0.5"/><rect x="5.9" y="6" width="11.4" height="8" rx="0.8" fill="none" stroke="#58a5e3" stroke-width="1"/><path d="M8.7 6V14M14.5 6V14M8.7 10H14.5" stroke="#58a5e3" stroke-width="0.95"/></svg>
<div class="t" style="top:866.78px;font-size:24px;line-height:34px;color:#000;letter-spacing:0.553px;left:298.14px;-webkit-text-stroke:0.18px #000;">Movies</div>
<div class="t" style="top:866.78px;font-size:24px;line-height:34px;color:#000;letter-spacing:-1.1px;right:1722.70px;-webkit-text-stroke:0.18px #000;">DIR</div>
<div class="t" style="top:866.78px;font-size:24px;line-height:34px;color:#000;letter-spacing:0.776px;left:821.90px;-webkit-text-stroke:0.18px #000;">2022/6/4 21:47</div>
<div class="t" style="top:866.78px;font-size:24px;line-height:34px;color:#000;letter-spacing:0.35px;left:1081.30px;-webkit-text-stroke:0.18px #000;">文件夹</div>
<svg class="b" style="left:259.7px;top:906.3px;filter:drop-shadow(0 0.9px 0.8px rgba(0,0,0,0.42));overflow:visible;" width="23.0" height="21.9" viewBox="0 0 23 21" preserveAspectRatio="none"><defs><linearGradient id="f145a" x1="0" y1="0" x2="0" y2="1"><stop offset="0" stop-color="#3c92da"/><stop offset="1" stop-color="#56a8e8"/></linearGradient><linearGradient id="f145b" x1="0" y1="0" x2="0" y2="1"><stop offset="0" stop-color="#8dd0f8"/><stop offset="0.78" stop-color="#86caf5"/><stop offset="0.8" stop-color="#7cc2f0"/><stop offset="1" stop-color="#79bfee"/></linearGradient></defs><path d="M0.4 2 Q0.4 0.4 2 0.4 L7.6 0.4 Q8.6 0.4 9.3 1.2 L10.4 2.5 L21 2.5 Q22.6 2.5 22.6 4.1 L22.6 8 L0.4 8 Z" fill="url(#f145a)"/><path d="M0.4 6 Q0.4 4.9 1.6 4.9 L21.4 4.9 Q22.6 4.9 22.6 6 L22.6 19.2 Q22.6 20.6 21.2 20.6 L1.8 20.6 Q0.4 20.6 0.4 19.2 Z" fill="url(#f145b)"/><path d="M0.4 6 Q0.4 4.9 1.6 4.9 L21.4 4.9 Q22.6 4.9 22.6 6" fill="none" stroke="#a6dcfb" stroke-width="0.5"/><path d="M9.7 14.4V7.8L14.5 6.6V13.2M9.7 9.4L14.5 8.2" stroke="#58a5e3" stroke-width="1" fill="none"/><ellipse cx="8.5" cy="14.4" rx="1.5" ry="1.2" fill="#58a5e3"/><ellipse cx="13.3" cy="13.2" rx="1.5" ry="1.2" fill="#58a5e3"/></svg>
<div class="t" style="top:900.78px;font-size:24px;line-height:34px;color:#000;letter-spacing:0.835px;left:298.14px;-webkit-text-stroke:0.18px #000;">Music</div>
<div class="t" style="top:900.78px;font-size:24px;line-height:34px;color:#000;letter-spacing:-1.1px;right:1722.70px;-webkit-text-stroke:0.18px #000;">DIR</div>
<div class="t" style="top:900.78px;font-size:24px;line-height:34px;color:#000;letter-spacing:0.864px;left:821.90px;-webkit-text-stroke:0.18px #000;">2022/5/12 22:48</div>
<div class="t" style="top:900.78px;font-size:24px;line-height:34px;color:#000;letter-spacing:0.35px;left:1081.30px;-webkit-text-stroke:0.18px #000;">文件夹</div>
<svg class="b" style="left:259.7px;top:940.3px;filter:drop-shadow(0 0.9px 0.8px rgba(0,0,0,0.42));overflow:visible;" width="23.0" height="21.9" viewBox="0 0 23 21" preserveAspectRatio="none"><defs><linearGradient id="f150a" x1="0" y1="0" x2="0" y2="1"><stop offset="0" stop-color="#3c92da"/><stop offset="1" stop-color="#56a8e8"/></linearGradient><linearGradient id="f150b" x1="0" y1="0" x2="0" y2="1"><stop offset="0" stop-color="#8dd0f8"/><stop offset="0.78" stop-color="#86caf5"/><stop offset="0.8" stop-color="#7cc2f0"/><stop offset="1" stop-color="#79bfee"/></linearGradient></defs><path d="M0.4 2 Q0.4 0.4 2 0.4 L7.6 0.4 Q8.6 0.4 9.3 1.2 L10.4 2.5 L21 2.5 Q22.6 2.5 22.6 4.1 L22.6 8 L0.4 8 Z" fill="url(#f150a)"/><path d="M0.4 6 Q0.4 4.9 1.6 4.9 L21.4 4.9 Q22.6 4.9 22.6 6 L22.6 19.2 Q22.6 20.6 21.2 20.6 L1.8 20.6 Q0.4 20.6 0.4 19.2 Z" fill="url(#f150b)"/><path d="M0.4 6 Q0.4 4.9 1.6 4.9 L21.4 4.9 Q22.6 4.9 22.6 6" fill="none" stroke="#a6dcfb" stroke-width="0.5"/></svg>
<div class="t" style="top:934.78px;font-size:24px;line-height:34px;color:#000;letter-spacing:0.293px;left:298.14px;-webkit-text-stroke:0.18px #000;">Parallels</div>
<div class="t" style="top:934.78px;font-size:24px;line-height:34px;color:#000;letter-spacing:-1.1px;right:1722.70px;-webkit-text-stroke:0.18px #000;">DIR</div>
<div class="t" style="top:934.78px;font-size:24px;line-height:34px;color:#000;letter-spacing:0.673px;left:821.90px;-webkit-text-stroke:0.18px #000;">2022/6/9 18:15</div>
<div class="t" style="top:934.78px;font-size:24px;line-height:34px;color:#000;letter-spacing:0.35px;left:1081.30px;-webkit-text-stroke:0.18px #000;">文件夹</div>
<svg class="b" style="left:259.7px;top:974.3px;filter:drop-shadow(0 0.9px 0.8px rgba(0,0,0,0.42));overflow:visible;" width="23.0" height="21.9" viewBox="0 0 23 21" preserveAspectRatio="none"><defs><linearGradient id="f155a" x1="0" y1="0" x2="0" y2="1"><stop offset="0" stop-color="#3c92da"/><stop offset="1" stop-color="#56a8e8"/></linearGradient><linearGradient id="f155b" x1="0" y1="0" x2="0" y2="1"><stop offset="0" stop-color="#8dd0f8"/><stop offset="0.78" stop-color="#86caf5"/><stop offset="0.8" stop-color="#7cc2f0"/><stop offset="1" stop-color="#79bfee"/></linearGradient></defs><path d="M0.4 2 Q0.4 0.4 2 0.4 L7.6 0.4 Q8.6 0.4 9.3 1.2 L10.4 2.5 L21 2.5 Q22.6 2.5 22.6 4.1 L22.6 8 L0.4 8 Z" fill="url(#f155a)"/><path d="M0.4 6 Q0.4 4.9 1.6 4.9 L21.4 4.9 Q22.6 4.9 22.6 6 L22.6 19.2 Q22.6 20.6 21.2 20.6 L1.8 20.6 Q0.4 20.6 0.4 19.2 Z" fill="url(#f155b)"/><path d="M0.4 6 Q0.4 4.9 1.6 4.9 L21.4 4.9 Q22.6 4.9 22.6 6" fill="none" stroke="#a6dcfb" stroke-width="0.5"/><rect x="5.9" y="6" width="11.4" height="8" rx="0.8" fill="none" stroke="#58a5e3" stroke-width="1"/><path d="M6.8 13.2 L10 9.6 L12.4 12 L13.8 10.8 L16.4 13.2 Z" fill="#58a5e3"/><circle cx="14.2" cy="8.4" r="0.9" fill="#58a5e3"/></svg>
<div class="t" style="top:968.78px;font-size:24px;line-height:34px;color:#000;letter-spacing:0.844px;left:298.14px;-webkit-text-stroke:0.18px #000;">Pictures</div>
<div class="t" style="top:968.78px;font-size:24px;line-height:34px;color:#000;letter-spacing:-1.1px;right:1722.70px;-webkit-text-stroke:0.18px #000;">DIR</div>
<div class="t" style="top:968.78px;font-size:24px;line-height:34px;color:#000;letter-spacing:0.675px;left:821.90px;-webkit-text-stroke:0.18px #000;">2022/6/6 19:21</div>
<div class="t" style="top:968.78px;font-size:24px;line-height:34px;color:#000;letter-spacing:0.35px;left:1081.30px;-webkit-text-stroke:0.18px #000;">文件夹</div>
<svg class="b" style="left:259.7px;top:1008.3px;filter:drop-shadow(0 0.9px 0.8px rgba(0,0,0,0.42));overflow:visible;" width="23.0" height="21.9" viewBox="0 0 23 21" preserveAspectRatio="none"><defs><linearGradient id="f160a" x1="0" y1="0" x2="0" y2="1"><stop offset="0" stop-color="#3c92da"/><stop offset="1" stop-color="#56a8e8"/></linearGradient><linearGradient id="f160b" x1="0" y1="0" x2="0" y2="1"><stop offset="0" stop-color="#8dd0f8"/><stop offset="0.78" stop-color="#86caf5"/><stop offset="0.8" stop-color="#7cc2f0"/><stop offset="1" stop-color="#79bfee"/></linearGradient></defs><path d="M0.4 2 Q0.4 0.4 2 0.4 L7.6 0.4 Q8.6 0.4 9.3 1.2 L10.4 2.5 L21 2.5 Q22.6 2.5 22.6 4.1 L22.6 8 L0.4 8 Z" fill="url(#f160a)"/><path d="M0.4 6 Q0.4 4.9 1.6 4.9 L21.4 4.9 Q22.6 4.9 22.6 6 L22.6 19.2 Q22.6 20.6 21.2 20.6 L1.8 20.6 Q0.4 20.6 0.4 19.2 Z" fill="url(#f160b)"/><path d="M0.4 6 Q0.4 4.9 1.6 4.9 L21.4 4.9 Q22.6 4.9 22.6 6" fill="none" stroke="#a6dcfb" stroke-width="0.5"/></svg>
<div class="t" style="top:1002.78px;font-size:24px;line-height:34px;color:#000;letter-spacing:0.578px;left:298.14px;-webkit-text-stroke:0.18px #000;">Postman</div>
<div class="t" style="top:1002.78px;font-size:24px;line-height:34px;color:#000;letter-spacing:-1.1px;right:1722.70px;-webkit-text-stroke:0.18px #000;">DIR</div>
<div class="t" style="top:1002.78px;font-size:24px;line-height:34px;color:#000;letter-spacing:0.442px;left:821.90px;-webkit-text-stroke:0.18px #000;">2022/1/4 17:35</div>
<div class="t" style="top:1002.78px;font-size:24px;line-height:34px;color:#000;letter-spacing:0.35px;left:1081.30px;-webkit-text-stroke:0.18px #000;">文件夹</div>
<svg class="b" style="left:259.7px;top:1042.3px;filter:drop-shadow(0 0.9px 0.8px rgba(0,0,0,0.42));overflow:visible;" width="23.0" height="21.9" viewBox="0 0 23 21" preserveAspectRatio="none"><defs><linearGradient id="f165a" x1="0" y1="0" x2="0" y2="1"><stop offset="0" stop-color="#3c92da"/><stop offset="1" stop-color="#56a8e8"/></linearGradient><linearGradient id="f165b" x1="0" y1="0" x2="0" y2="1"><stop offset="0" stop-color="#8dd0f8"/><stop offset="0.78" stop-color="#86caf5"/><stop offset="0.8" stop-color="#7cc2f0"/><stop offset="1" stop-color="#79bfee"/></linearGradient></defs><path d="M0.4 2 Q0.4 0.4 2 0.4 L7.6 0.4 Q8.6 0.4 9.3 1.2 L10.4 2.5 L21 2.5 Q22.6 2.5 22.6 4.1 L22.6 8 L0.4 8 Z" fill="url(#f165a)"/><path d="M0.4 6 Q0.4 4.9 1.6 4.9 L21.4 4.9 Q22.6 4.9 22.6 6 L22.6 19.2 Q22.6 20.6 21.2 20.6 L1.8 20.6 Q0.4 20.6 0.4 19.2 Z" fill="url(#f165b)"/><path d="M0.4 6 Q0.4 4.9 1.6 4.9 L21.4 4.9 Q22.6 4.9 22.6 6" fill="none" stroke="#a6dcfb" stroke-width="0.5"/><path d="M11.6 5.4 L16.9 10.6 L11.6 15.8 L6.3 10.6 Z" fill="none" stroke="#58a5e3" stroke-width="0.95" stroke-linejoin="round"/><path d="M11.6 13V8.2M9.8 10 L11.6 8.2 L13.4 10" fill="none" stroke="#58a5e3" stroke-width="0.9"/></svg>
<div class="t" style="top:1036.78px;font-size:24px;line-height:34px;color:#000;letter-spacing:0.657px;left:298.14px;-webkit-text-stroke:0.18px #000;">Public</div>
<div class="t" style="top:1036.78px;font-size:24px;line-height:34px;color:#000;letter-spacing:-1.1px;right:1722.70px;-webkit-text-stroke:0.18px #000;">DIR</div>
<div class="t" style="top:1036.78px;font-size:24px;line-height:34px;color:#000;letter-spacing:0.222px;left:821.90px;-webkit-text-stroke:0.18px #000;">2021/7/26 17:41</div>
<div class="t" style="top:1036.78px;font-size:24px;line-height:34px;color:#000;letter-spacing:0.35px;left:1081.30px;-webkit-text-stroke:0.18px #000;">文件夹</div>
<svg class="b" style="left:259.7px;top:1076.3px;filter:drop-shadow(0 0.9px 0.8px rgba(0,0,0,0.42));overflow:visible;" width="23.0" height="21.9" viewBox="0 0 23 21" preserveAspectRatio="none"><defs><linearGradient id="f170a" x1="0" y1="0" x2="0" y2="1"><stop offset="0" stop-color="#3c92da"/><stop offset="1" stop-color="#56a8e8"/></linearGradient><linearGradient id="f170b" x1="0" y1="0" x2="0" y2="1"><stop offset="0" stop-color="#8dd0f8"/><stop offset="0.78" stop-color="#86caf5"/><stop offset="0.8" stop-color="#7cc2f0"/><stop offset="1" stop-color="#79bfee"/></linearGradient></defs><path d="M0.4 2 Q0.4 0.4 2 0.4 L7.6 0.4 Q8.6 0.4 9.3 1.2 L10.4 2.5 L21 2.5 Q22.6 2.5 22.6 4.1 L22.6 8 L0.4 8 Z" fill="url(#f170a)"/><path d="M0.4 6 Q0.4 4.9 1.6 4.9 L21.4 4.9 Q22.6 4.9 22.6 6 L22.6 19.2 Q22.6 20.6 21.2 20.6 L1.8 20.6 Q0.4 20.6 0.4 19.2 Z" fill="url(#f170b)"/><path d="M0.4 6 Q0.4 4.9 1.6 4.9 L21.4 4.9 Q22.6 4.9 22.6 6" fill="none" stroke="#a6dcfb" stroke-width="0.5"/></svg>
<div class="t" style="top:1070.78px;font-size:24px;line-height:34px;color:#000;letter-spacing:0.499px;left:299.18px;-webkit-text-stroke:0.18px #000;">sensors</div>
<div class="t" style="top:1070.78px;font-size:24px;line-height:34px;color:#000;letter-spacing:-1.1px;right:1722.70px;-webkit-text-stroke:0.18px #000;">DIR</div>
<div class="t" style="top:1070.78px;font-size:24px;line-height:34px;color:#000;letter-spacing:0.961px;left:821.90px;-webkit-text-stroke:0.18px #000;">2021/8/9 22:46</div>
<div class="t" style="top:1070.78px;font-size:24px;line-height:34px;color:#000;letter-spacing:0.35px;left:1081.30px;-webkit-text-stroke:0.18px #000;">文件夹</div>
<svg class="b" style="left:259.7px;top:1110.3px;filter:drop-shadow(0 0.9px 0.8px rgba(0,0,0,0.42));overflow:visible;" width="23.0" height="21.9" viewBox="0 0 23 21" preserveAspectRatio="none"><defs><linearGradient id="f175a" x1="0" y1="0" x2="0" y2="1"><stop offset="0" stop-color="#3c92da"/><stop offset="1" stop-color="#56a8e8"/></linearGradient><linearGradient id="f175b" x1="0" y1="0" x2="0" y2="1"><stop offset="0" stop-color="#8dd0f8"/><stop offset="0.78" stop-color="#86caf5"/><stop offset="0.8" stop-color="#7cc2f0"/><stop offset="1" stop-color="#79bfee"/></linearGradient></defs><path d="M0.4 2 Q0.4 0.4 2 0.4 L7.6 0.4 Q8.6 0.4 9.3 1.2 L10.4 2.5 L21 2.5 Q22.6 2.5 22.6 4.1 L22.6 8 L0.4 8 Z" fill="url(#f175a)"/><path d="M0.4 6 Q0.4 4.9 1.6 4.9 L21.4 4.9 Q22.6 4.9 22.6 6 L22.6 19.2 Q22.6 20.6 21.2 20.6 L1.8 20.6 Q0.4 20.6 0.4 19.2 Z" fill="url(#f175b)"/><path d="M0.4 6 Q0.4 4.9 1.6 4.9 L21.4 4.9 Q22.6 4.9 22.6 6" fill="none" stroke="#a6dcfb" stroke-width="0.5"/></svg>
<div class="t" style="top:1104.78px;font-size:24px;line-height:34px;color:#000;letter-spacing:0.389px;left:298.73px;-webkit-text-stroke:0.18px #000;">Sunlogin Files</div>
<div class="t" style="top:1104.78px;font-size:24px;line-height:34px;color:#000;letter-spacing:-1.1px;right:1722.70px;-webkit-text-stroke:0.18px #000;">DIR</div>
<div class="t" style="top:1104.78px;font-size:24px;line-height:34px;color:#000;letter-spacing:0.961px;left:821.90px;-webkit-text-stroke:0.18px #000;">2021/8/9 22:46</div>
<div class="t" style="top:1104.78px;font-size:24px;line-height:34px;color:#000;letter-spacing:0.35px;left:1081.30px;-webkit-text-stroke:0.18px #000;">文件夹</div>
<svg class="b" style="left:259.7px;top:1144.3px;filter:drop-shadow(0 0.9px 0.8px rgba(0,0,0,0.42));overflow:visible;" width="23.0" height="21.9" viewBox="0 0 23 21" preserveAspectRatio="none"><defs><linearGradient id="f180a" x1="0" y1="0" x2="0" y2="1"><stop offset="0" stop-color="#3c92da"/><stop offset="1" stop-color="#56a8e8"/></linearGradient><linearGradient id="f180b" x1="0" y1="0" x2="0" y2="1"><stop offset="0" stop-color="#8dd0f8"/><stop offset="0.78" stop-color="#86caf5"/><stop offset="0.8" stop-color="#7cc2f0"/><stop offset="1" stop-color="#79bfee"/></linearGradient></defs><path d="M0.4 2 Q0.4 0.4 2 0.4 L7.6 0.4 Q8.6 0.4 9.3 1.2 L10.4 2.5 L21 2.5 Q22.6 2.5 22.6 4.1 L22.6 8 L0.4 8 Z" fill="url(#f180a)"/><path d="M0.4 6 Q0.4 4.9 1.6 4.9 L21.4 4.9 Q22.6 4.9 22.6 6 L22.6 19.2 Q22.6 20.6 21.2 20.6 L1.8 20.6 Q0.4 20.6 0.4 19.2 Z" fill="url(#f180b)"/><path d="M0.4 6 Q0.4 4.9 1.6 4.9 L21.4 4.9 Q22.6 4.9 22.6 6" fill="none" stroke="#a6dcfb" stroke-width="0.5"/></svg>
<div class="t" style="top:1138.78px;font-size:24px;line-height:34px;color:#000;letter-spacing:0.321px;left:299.39px;-webkit-text-stroke:0.18px #000;">Topaz Labs LLC</div>
<div class="t" style="top:1138.78px;font-size:24px;line-height:34px;color:#000;letter-spacing:-1.1px;right:1722.70px;-webkit-text-stroke:0.18px #000;">DIR</div>
<div class="t" style="top:1138.78px;font-size:24px;line-height:34px;color:#000;letter-spacing:0.561px;left:821.90px;-webkit-text-stroke:0.18px #000;">2022/3/16 20:17</div>
<div class="t" style="top:1138.78px;font-size:24px;line-height:34px;color:#000;letter-spacing:0.35px;left:1081.30px;-webkit-text-stroke:0.18px #000;">文件夹</div>
<svg class="b" style="left:259.7px;top:1178.3px;filter:drop-shadow(0 0.9px 0.8px rgba(0,0,0,0.42));overflow:visible;" width="23.0" height="21.9" viewBox="0 0 23 21" preserveAspectRatio="none"><defs><linearGradient id="f185a" x1="0" y1="0" x2="0" y2="1"><stop offset="0" stop-color="#3c92da"/><stop offset="1" stop-color="#56a8e8"/></linearGradient><linearGradient id="f185b" x1="0" y1="0" x2="0" y2="1"><stop offset="0" stop-color="#8dd0f8"/><stop offset="0.78" stop-color="#86caf5"/><stop offset="0.8" stop-color="#7cc2f0"/><stop offset="1" stop-color="#79bfee"/></linearGradient></defs><path d="M0.4 2 Q0.4 0.4 2 0.4 L7.6 0.4 Q8.6 0.4 9.3 1.2 L10.4 2.5 L21 2.5 Q22.6 2.5 22.6 4.1 L22.6 8 L0.4 8 Z" fill="url(#f185a)"/><path d="M0.4 6 Q0.4 4.9 1.6 4.9 L21.4 4.9 Q22.6 4.9 22.6 6 L22.6 19.2 Q22.6 20.6 21.2 20.6 L1.8 20.6 Q0.4 20.6 0.4 19.2 Z" fill="url(#f185b)"/><path d="M0.4 6 Q0.4 4.9 1.6 4.9 L21.4 4.9 Q22.6 4.9 22.6 6" fill="none" stroke="#a6dcfb" stroke-width="0.5"/></svg>
<div class="t" style="top:1172.78px;font-size:24px;line-height:34px;color:#000;letter-spacing:0.465px;left:298.39px;-webkit-text-stroke:0.18px #000;">Users</div>
<div class="t" style="top:1172.78px;font-size:24px;line-height:34px;color:#000;letter-spacing:-1.1px;right:1722.70px;-webkit-text-stroke:0.18px #000;">DIR</div>
<div class="t" style="top:1172.78px;font-size:24px;line-height:34px;color:#000;letter-spacing:0.713px;left:821.90px;-webkit-text-stroke:0.18px #000;">2022/2/14 23:51</div>
<div class="t" style="top:1172.78px;font-size:24px;line-height:34px;color:#000;letter-spacing:0.35px;left:1081.30px;-webkit-text-stroke:0.18px #000;">文件夹</div>
<svg class="b" style="left:261px;top:1211.2px;filter:drop-shadow(0 0.7px 0.6px rgba(0,0,0,0.22));overflow:visible;" width="20.2" height="23.6" viewBox="0 0 20.2 23.6" preserveAspectRatio="none"><defs><linearGradient id="dg190" x1="0" y1="0" x2="0" y2="1"><stop offset="0" stop-color="#fbe35a"/><stop offset="0.55" stop-color="#f5a93c"/><stop offset="1" stop-color="#ea5c4c"/></linearGradient></defs><path d="M1.4 0.6 H12 L19.4 7.6 V22.4 Q19.4 23 18.8 23 H1.4 Q0.8 23 0.8 22.4 V1.2 Q0.8 0.6 1.4 0.6 Z" fill="#f5f5f5" stroke="#e3e3e3" stroke-width="0.7"/><path d="M2.6 2.4 H11.6 V8 H17.8 V21.2 H2.6 Z" fill="#f0f0f0" opacity="0.7"/><path d="M12 0.8 V7.6 H19.2 Z" fill="#fcfcfc" stroke="#d2d2d2" stroke-width="0.6"/><circle cx="10" cy="12.8" r="3.8" fill="none" stroke="#86bdea" stroke-width="2.7"/><circle cx="10" cy="12.8" r="5.3" fill="none" stroke="#98c9ef" stroke-width="1.2" stroke-dasharray="2 1.4"/><path d="M7.4 8 Q3.4 12.6 7.4 17.6 Q4.6 12.8 7.4 8 Z" fill="url(#dg190)" stroke="url(#dg190)" stroke-width="1.9" stroke-linejoin="round" opacity="0.9"/><path d="M6.8 8.2 Q9.4 6.6 12.2 6.8 L12 3.4" fill="none" stroke="#8a94a6" stroke-width="0.9"/></svg>
<div class="t" style="top:1206.78px;font-size:24px;line-height:34px;color:#000;letter-spacing:0.414px;left:298.87px;-webkit-text-stroke:0.18px #000;">apolloOne</div>
<div class="t" style="top:1206.78px;font-size:24px;line-height:34px;color:#000;letter-spacing:1.5px;left:611.00px;-webkit-text-stroke:0.18px #000;">db</div>
<div class="t" style="top:1206.78px;font-size:24px;line-height:34px;color:#000;letter-spacing:0.5px;right:1721.10px;-webkit-text-stroke:0.18px #000;">86 KB</div>
<div class="t" style="top:1206.78px;font-size:24px;line-height:34px;color:#000;letter-spacing:0.697px;left:821.90px;-webkit-text-stroke:0.18px #000;">2022/6/10 01:00</div>
<div class="b" style="left:212px;top:1240px;width:1047px;height:1.2px;background:#dadada;"></div>
<div class="b" style="left:212px;top:1241px;width:1047px;height:37px;background:#fff;"></div>
<div class="t" style="top:1247.18px;font-size:22px;line-height:29px;color:#2c2c2c;letter-spacing:0.62px;left:134.60px;width:1200px;text-align:center;-webkit-text-stroke:0.15px #2c2c2c;">0 <span class="cj">字节</span> / 3 MB in 0 / 2 file(s). 0 / 21 dir(s)</div>
<div class="b" style="left:1261px;top:251px;width:1047px;height:48px;background:#f5f2ed;"></div>
<div class="b" style="left:1261px;top:299px;width:1047px;height:1px;background:#a9a5a1;"></div>
<svg class="b" style="left:1298px;top:260.5px;filter:drop-shadow(0 0.5px 0.5px rgba(0,0,0,0.3));overflow:visible;" width="26" height="26" viewBox="0 0 25.6 25.8" preserveAspectRatio="none"><defs><linearGradient id="hdg200" x1="0" y1="0" x2="0.3" y2="1"><stop offset="0" stop-color="#94a6b1"/><stop offset="0.55" stop-color="#b9c6cd"/><stop offset="1" stop-color="#ccd6da"/></linearGradient></defs><path d="M2.4 1.6 Q2.7 0.4 4 0.4 L21.6 0.4 Q22.9 0.4 23.2 1.6 L25.2 20.6 L25.2 23.4 Q25.2 25.4 23.2 25.4 L2.4 25.4 Q0.4 25.4 0.4 23.4 L0.4 20.6 Z" fill="url(#hdg200)" stroke="#6f7d86" stroke-width="0.7"/><path d="M0.5 21.2 L25.1 21.2 L25.1 23.4 Q25.1 25.3 23.2 25.3 L2.4 25.3 Q0.5 25.3 0.5 23.4 Z" fill="#33383b"/><ellipse cx="11.6" cy="12.6" rx="7.8" ry="7.2" fill="none" stroke="#dde5e9" stroke-width="0.9"/><ellipse cx="11.8" cy="12.8" rx="3.4" ry="3.1" fill="#c9d4da" stroke="#e4ebee" stroke-width="0.7"/><path d="M16.6 3.2 Q16.8 7.4 12.6 9.8 Q8.8 12 7.4 15.2" fill="none" stroke="#e9eef0" stroke-width="1.1"/><rect x="5.4" y="1.9" width="10.4" height="1.9" rx="0.6" fill="#5f6c74"/><rect x="4" y="22.4" width="4.4" height="1.3" fill="#7c868b"/><rect x="10.4" y="22.4" width="2" height="1.3" fill="#7c868b"/><rect x="14" y="22.4" width="2" height="1.3" fill="#7c868b"/><rect x="18" y="22.4" width="3.6" height="1.3" fill="#7c868b"/></svg>
<div class="t" style="top:259.58px;font-size:22px;line-height:29px;color:#767370;letter-spacing:0.75px;left:1333.00px;">Macintosh HD</div>
<div class="b" style="left:1509px;top:256px;width:164px;height:36px;border-radius:9px;background:#d3cfcb;"></div>
<svg class="b" style="left:1524px;top:262.5px;filter:drop-shadow(0 0.9px 0.8px rgba(0,0,0,0.42));overflow:visible;" width="26" height="23.5" viewBox="0 0 23 21" preserveAspectRatio="none"><defs><linearGradient id="f203a" x1="0" y1="0" x2="0" y2="1"><stop offset="0" stop-color="#3c92da"/><stop offset="1" stop-color="#56a8e8"/></linearGradient><linearGradient id="f203b" x1="0" y1="0" x2="0" y2="1"><stop offset="0" stop-color="#8dd0f8"/><stop offset="0.78" stop-color="#86caf5"/><stop offset="0.8" stop-color="#7cc2f0"/><stop offset="1" stop-color="#79bfee"/></linearGradient></defs><path d="M0.4 2 Q0.4 0.4 2 0.4 L7.6 0.4 Q8.6 0.4 9.3 1.2 L10.4 2.5 L21 2.5 Q22.6 2.5 22.6 4.1 L22.6 8 L0.4 8 Z" fill="url(#f203a)"/><path d="M0.4 6 Q0.4 4.9 1.6 4.9 L21.4 4.9 Q22.6 4.9 22.6 6 L22.6 19.2 Q22.6 20.6 21.2 20.6 L1.8 20.6 Q0.4 20.6 0.4 19.2 Z" fill="url(#f203b)"/><path d="M0.4 6 Q0.4 4.9 1.6 4.9 L21.4 4.9 Q22.6 4.9 22.6 6" fill="none" stroke="#a6dcfb" stroke-width="0.5"/><path d="M11.2 6.4 L5 11.7 L6.9 11.7 L6.9 15.7 L9.9 15.7 L9.9 12.9 L12.5 12.9 L12.5 15.7 L15.5 15.7 L15.5 11.7 L17.4 11.7 Z" fill="#64abe7"/><rect x="14" y="7" width="1.4" height="2.6" fill="#64abe7"/></svg>
<div class="t" style="top:259.58px;font-size:22px;line-height:29px;color:#2b2a29;letter-spacing:0.72px;left:1559.80px;">macmiao</div>
<svg class="b" style="left:1698.5px;top:261px;filter:drop-shadow(0 0.5px 0.5px rgba(0,0,0,0.3));overflow:visible;" width="25" height="26" viewBox="0 0 24.6 25.6" preserveAspectRatio="none"><defs><linearGradient id="cmg205" x1="0" y1="0" x2="0" y2="1"><stop offset="0" stop-color="#aebfca"/><stop offset="1" stop-color="#d6e3e9"/></linearGradient></defs><path d="M2.9 1.2 Q3.1 0.4 4 0.4 L20.6 0.4 Q21.5 0.4 21.7 1.2 L24.2 22 L24.2 23.6 Q24.2 25.2 22.6 25.2 L2 25.2 Q0.4 25.2 0.4 23.6 L0.4 22 Z" fill="url(#cmg205)" stroke="#53575c" stroke-width="0.9"/><path d="M0.9 22.6 L23.7 22.6 L23.7 23.5 Q23.7 24.7 22.5 24.7 L2.1 24.7 Q0.9 24.7 0.9 23.5 Z" fill="#cbc8bc"/><path d="M0.8 22.3 H23.8" stroke="#6a6e72" stroke-width="0.7"/><path d="M5 7.4 Q5 3.4 8.6 3.4 Q10.6 3.4 11.6 4.4 L17.6 4.4 Q19.8 4.4 19.8 7.4 Z" fill="#f4f3fb"/><path d="M3.9 9 Q3.9 7.2 5.7 7.2 L12 7.2 L12 16.4 L5.7 16.4 Q3.9 16.4 3.9 14.6 Z" fill="#7a4fe2"/><path d="M12 7.2 L18.9 7.2 Q20.7 7.2 20.7 9 L20.7 14.6 Q20.7 16.4 18.9 16.4 L12 16.4 Z" fill="#291f6f"/><rect x="5.6" y="10.6" width="4.6" height="1.5" rx="0.4" fill="#e9defd"/><rect x="5.6" y="13.4" width="4.6" height="0.9" fill="#a98af0"/><rect x="5.6" y="8.6" width="4.6" height="0.8" fill="#a98af0"/><rect x="13.8" y="10.8" width="4.8" height="0.9" fill="#4a3fa0"/><rect x="13.8" y="8.8" width="4.8" height="0.7" fill="#3a2f8a"/><rect x="13.8" y="13.2" width="4.8" height="0.7" fill="#3a2f8a"/><rect x="21.2" y="23.1" width="1.6" height="1.2" fill="#74d64f"/></svg>
<div class="t" style="top:259.58px;font-size:22px;line-height:29px;color:#767370;letter-spacing:0.31px;left:1729.10px;">Commander One PRO Pack v3.4[www.macat...</div>
<svg class="b" style="left:2247px;top:263px;" width="30" height="24" viewBox="0 0 30 24" preserveAspectRatio="none"><path d="M5.2 5 L13 12.2 L5.2 19.4 M15.2 5 L23 12.2 L15.2 19.4" fill="none" stroke="#222" stroke-width="2.6" stroke-linecap="round" stroke-linejoin="round"/></svg>
<div class="b" style="left:1261px;top:300px;width:1047px;height:50px;background:#f5f1ed;"></div>
<div class="b" style="left:1281px;top:305px;width:654px;height:40px;border-radius:10px;background:#fff;box-shadow:0 0 0 1px rgba(0,0,0,0.07),0 1px 2.5px rgba(0,0,0,0.22);"></div>
<svg class="b" style="left:1298px;top:313px;filter:drop-shadow(0 0.9px 0.8px rgba(0,0,0,0.42));overflow:visible;" width="27.5" height="24.6" viewBox="0 0 23 21" preserveAspectRatio="none"><defs><linearGradient id="f210a" x1="0" y1="0" x2="0" y2="1"><stop offset="0" stop-color="#3c92da"/><stop offset="1" stop-color="#56a8e8"/></linearGradient><linearGradient id="f210b" x1="0" y1="0" x2="0" y2="1"><stop offset="0" stop-color="#8dd0f8"/><stop offset="0.78" stop-color="#86caf5"/><stop offset="0.8" stop-color="#7cc2f0"/><stop offset="1" stop-color="#79bfee"/></linearGradient></defs><path d="M0.4 2 Q0.4 0.4 2 0.4 L7.6 0.4 Q8.6 0.4 9.3 1.2 L10.4 2.5 L21 2.5 Q22.6 2.5 22.6 4.1 L22.6 8 L0.4 8 Z" fill="url(#f210a)"/><path d="M0.4 6 Q0.4 4.9 1.6 4.9 L21.4 4.9 Q22.6 4.9 22.6 6 L22.6 19.2 Q22.6 20.6 21.2 20.6 L1.8 20.6 Q0.4 20.6 0.4 19.2 Z" fill="url(#f210b)"/><path d="M0.4 6 Q0.4 4.9 1.6 4.9 L21.4 4.9 Q22.6 4.9 22.6 6" fill="none" stroke="#a6dcfb" stroke-width="0.5"/><path d="M11.2 6.4 L5 11.7 L6.9 11.7 L6.9 15.7 L9.9 15.7 L9.9 12.9 L12.5 12.9 L12.5 15.7 L15.5 15.7 L15.5 11.7 L17.4 11.7 Z" fill="#64abe7"/><rect x="14" y="7" width="1.4" height="2.6" fill="#64abe7"/></svg>
<div class="t" style="top:308.24px;font-size:25px;line-height:32px;color:#111;letter-spacing:-0.03px;left:1335.00px;">macmiao</div>
<div class="b" style="left:1899px;top:309px;width:32px;height:32px;border-radius:8.5px;background:linear-gradient(#4d95f9,#2a70ee);box-shadow:0 0.5px 1px rgba(0,0,0,0.3);"></div>
<svg class="b" style="left:1899px;top:309px;" width="32" height="32" viewBox="0 0 32 32" preserveAspectRatio="none"><path d="M10.2 13.4 L16 7.6 L21.8 13.4 M10.2 18.8 L16 24.6 L21.8 18.8" fill="none" stroke="#fff" stroke-width="2.8" stroke-linecap="round" stroke-linejoin="round"/></svg>
<div class="t" style="top:311.52px;font-size:21.6px;line-height:28px;color:#767370;letter-spacing:0.7px;left:1955.30px;">433.81 GB of 2 TB free</div>
<div class="b" style="left:1261px;top:350px;width:1047px;height:48px;background:linear-gradient(#d5d4d6,#c8c7c8);"></div>
<div class="b" style="left:1261px;top:350px;width:20px;height:48px;background:linear-gradient(#c2c1c2,#b9b8b9);"></div>
<div class="b" style="left:2257px;top:350px;width:51px;height:48px;background:linear-gradient(#c3c2c3,#b8b7b9);border-left:2px solid #a3a2a3;box-sizing:border-box;"></div>
<div class="b" style="left:1261px;top:350px;width:1047px;height:1.6px;background:#aaa9aa;"></div>
<div class="b" style="left:1261px;top:396px;width:1047px;height:2px;background:#a8a7a8;"></div>
<svg class="b" style="left:2271px;top:363px;" width="24" height="24" viewBox="0 0 24 24" preserveAspectRatio="none"><path d="M1.2 12 H22.8 M12 1.2 V22.8" stroke="#5f5d60" stroke-width="1.9" fill="none"/></svg>
<div class="t" style="top:360.97px;font-size:21px;line-height:27px;color:#1e1e1e;letter-spacing:0.1px;font-weight:700;left:1169.60px;width:1200px;text-align:center;">macmiao</div>
<div class="b" style="left:1261px;top:398px;width:1047px;height:44px;background:#f5f1ed;"></div>
<div class="b" style="left:2208.2px;top:398px;width:1.6px;height:44px;background:#dcd7d2;"></div>
<div class="b" style="left:2258.2px;top:398px;width:1.6px;height:44px;background:#dcd7d2;"></div>
<div class="b" style="left:1261px;top:441.5px;width:1047px;height:1.5px;background:#3c3c3c;"></div>
<svg class="b" style="left:1294.5px;top:409px;filter:drop-shadow(0 0.9px 0.8px rgba(0,0,0,0.42));overflow:visible;" width="29" height="26" viewBox="0 0 23 21" preserveAspectRatio="none"><defs><linearGradient id="f226a" x1="0" y1="0" x2="0" y2="1"><stop offset="0" stop-color="#3c92da"/><stop offset="1" stop-color="#56a8e8"/></linearGradient><linearGradient id="f226b" x1="0" y1="0" x2="0" y2="1"><stop offset="0" stop-color="#8dd0f8"/><stop offset="0.78" stop-color="#86caf5"/><stop offset="0.8" stop-color="#7cc2f0"/><stop offset="1" stop-color="#79bfee"/></linearGradient></defs><path d="M0.4 2 Q0.4 0.4 2 0.4 L7.6 0.4 Q8.6 0.4 9.3 1.2 L10.4 2.5 L21 2.5 Q22.6 2.5 22.6 4.1 L22.6 8 L0.4 8 Z" fill="url(#f226a)"/><path d="M0.4 6 Q0.4 4.9 1.6 4.9 L21.4 4.9 Q22.6 4.9 22.6 6 L22.6 19.2 Q22.6 20.6 21.2 20.6 L1.8 20.6 Q0.4 20.6 0.4 19.2 Z" fill="url(#f226b)"/><path d="M0.4 6 Q0.4 4.9 1.6 4.9 L21.4 4.9 Q22.6 4.9 22.6 6" fill="none" stroke="#a6dcfb" stroke-width="0.5"/><path d="M11.2 6.4 L5 11.7 L6.9 11.7 L6.9 15.7 L9.9 15.7 L9.9 12.9 L12.5 12.9 L12.5 15.7 L15.5 15.7 L15.5 11.7 L17.4 11.7 Z" fill="#64abe7"/><rect x="14" y="7" width="1.4" height="2.6" fill="#64abe7"/></svg>
<div class="t" style="top:405.24px;font-size:25px;line-height:32px;color:#777472;letter-spacing:-0.08px;left:1333.00px;">macmiao</div>
<svg class="b" style="left:2222px;top:408px;" width="24" height="24" viewBox="0 0 24 24" preserveAspectRatio="none"><rect x="0" y="0.9" width="24" height="2" fill="#726f6c"/><rect x="0" y="4.9" width="24" height="2" fill="#726f6c"/><rect x="0" y="8.9" width="24" height="2" fill="#726f6c"/><rect x="0" y="12.9" width="24" height="2" fill="#726f6c"/><rect x="0" y="16.9" width="24" height="2" fill="#726f6c"/><rect x="0" y="20.9" width="24" height="2" fill="#726f6c"/></svg>
<svg class="b" style="left:2270px;top:407px;" width="28" height="27" viewBox="0 0 28 27" preserveAspectRatio="none"><path d="M14 0.6 L17.3 10.1 L27.4 10.3 L19.3 16.4 L22.3 26 L14 20.3 L5.7 26 L8.7 16.4 L0.6 10.3 L10.7 10.1 Z" fill="#7b7976"/></svg>
<div class="b" style="left:1261px;top:443px;width:1047px;height:38px;background:#fff;"></div>
<div class="b" style="left:1261px;top:481px;width:1047px;height:1px;background:#c2c2c2;"></div>
<div class="b" style="left:1279px;top:448px;width:1.8px;height:28px;background:#a3a3a3;"></div>
<div class="b" style="left:1644px;top:448px;width:1.8px;height:28px;background:#a3a3a3;"></div>
<div class="b" style="left:1724px;top:448px;width:1.8px;height:28px;background:#a3a3a3;"></div>
<div class="b" style="left:1854px;top:448px;width:1.8px;height:28px;background:#a3a3a3;"></div>
<div class="b" style="left:2114px;top:448px;width:1.8px;height:28px;background:#a3a3a3;"></div>
<div class="b" style="left:2286px;top:448px;width:1.8px;height:28px;background:#a3a3a3;"></div>
<div class="b" style="left:2306px;top:448px;width:1.8px;height:28px;background:#a3a3a3;"></div>
<div class="t" style="top:447.55px;font-size:22.5px;line-height:29px;color:#1c1c1c;letter-spacing:0.3px;font-weight:700;left:1316.60px;">name</div>
<svg class="b" style="left:1614px;top:457px;" width="18" height="12" viewBox="0 0 18 12" preserveAspectRatio="none"><path d="M2.6 9.8 L9 3.4 L15.4 9.8" fill="none" stroke="#6b6b6b" stroke-width="1.6" stroke-linecap="round" stroke-linejoin="round"/></svg>
<div class="t" style="top:447.55px;font-size:22.5px;line-height:29px;color:#1c1c1c;letter-spacing:0.35px;left:1670.00px;">ext</div>
<div class="t" style="top:447.55px;font-size:22.5px;line-height:29px;color:#1c1c1c;letter-spacing:0.3px;right:662.60px;">size</div>
<div class="t" style="top:447.55px;font-size:22.5px;line-height:29px;color:#1c1c1c;letter-spacing:0.85px;left:1879.60px;">modified</div>
<div class="t" style="top:447.55px;font-size:22.5px;line-height:29px;color:#1c1c1c;letter-spacing:0.4px;left:2140.00px;">kind</div>
<div class="b" style="left:1261px;top:482px;width:1047px;height:759px;background:#fff;"></div>
<div class="b" style="left:1644px;top:482px;width:1.5px;height:758px;background:#dfdfdf;"></div>
<div class="b" style="left:1724px;top:482px;width:1.5px;height:758px;background:#dfdfdf;"></div>
<div class="b" style="left:1854px;top:482px;width:1.5px;height:758px;background:#dfdfdf;"></div>
<div class="b" style="left:2114px;top:482px;width:1.5px;height:758px;background:#dfdfdf;"></div>
<svg class="b" style="left:1308.7px;top:498.3px;filter:drop-shadow(0 0.9px 0.8px rgba(0,0,0,0.42));overflow:visible;" width="23.0" height="21.9" viewBox="0 0 23 21" preserveAspectRatio="none"><defs><linearGradient id="f250a" x1="0" y1="0" x2="0" y2="1"><stop offset="0" stop-color="#3c92da"/><stop offset="1" stop-color="#56a8e8"/></linearGradient><linearGradient id="f250b" x1="0" y1="0" x2="0" y2="1"><stop offset="0" stop-color="#8dd0f8"/><stop offset="0.78" stop-color="#86caf5"/><stop offset="0.8" stop-color="#7cc2f0"/><stop offset="1" stop-color="#79bfee"/></linearGradient></defs><path d="M0.4 2 Q0.4 0.4 2 0.4 L7.6 0.4 Q8.6 0.4 9.3 1.2 L10.4 2.5 L21 2.5 Q22.6 2.5 22.6 4.1 L22.6 8 L0.4 8 Z" fill="url(#f250a)"/><path d="M0.4 6 Q0.4 4.9 1.6 4.9 L21.4 4.9 Q22.6 4.9 22.6 6 L22.6 19.2 Q22.6 20.6 21.2 20.6 L1.8 20.6 Q0.4 20.6 0.4 19.2 Z" fill="url(#f250b)"/><path d="M0.4 6 Q0.4 4.9 1.6 4.9 L21.4 4.9 Q22.6 4.9 22.6 6" fill="none" stroke="#a6dcfb" stroke-width="0.5"/><path d="M8 12a3.6 3.6 0 1 1 3.6 3.4a2.3 2.3 0 1 1 2.2-2.6" fill="none" stroke="#6db6ea" stroke-width="1"/></svg>
<div class="t" style="top:492.78px;font-size:24px;line-height:34px;color:#000;letter-spacing:0.35px;left:1347.41px;-webkit-text-stroke:0.18px #000;">全部数据库</div>
<div class="t" style="top:492.78px;font-size:24px;line-height:34px;color:#000;letter-spacing:-1.1px;right:673.70px;-webkit-text-stroke:0.18px #000;">DIR</div>
<div class="t" style="top:492.78px;font-size:24px;line-height:34px;color:#000;letter-spacing:0.665px;left:1870.90px;-webkit-text-stroke:0.18px #000;">2022/4/10 01:26</div>
<div class="t" style="top:492.78px;font-size:24px;line-height:34px;color:#000;letter-spacing:0.35px;left:2130.30px;-webkit-text-stroke:0.18px #000;">文件夹</div>
<svg class="b" style="left:1308.7px;top:532.3px;filter:drop-shadow(0 0.9px 0.8px rgba(0,0,0,0.42));overflow:visible;" width="23.0" height="21.9" viewBox="0 0 23 21" preserveAspectRatio="none"><defs><linearGradient id="f255a" x1="0" y1="0" x2="0" y2="1"><stop offset="0" stop-color="#3c92da"/><stop offset="1" stop-color="#56a8e8"/></linearGradient><linearGradient id="f255b" x1="0" y1="0" x2="0" y2="1"><stop offset="0" stop-color="#8dd0f8"/><stop offset="0.78" stop-color="#86caf5"/><stop offset="0.8" stop-color="#7cc2f0"/><stop offset="1" stop-color="#79bfee"/></linearGradient></defs><path d="M0.4 2 Q0.4 0.4 2 0.4 L7.6 0.4 Q8.6 0.4 9.3 1.2 L10.4 2.5 L21 2.5 Q22.6 2.5 22.6 4.1 L22.6 8 L0.4 8 Z" fill="url(#f255a)"/><path d="M0.4 6 Q0.4 4.9 1.6 4.9 L21.4 4.9 Q22.6 4.9 22.6 6 L22.6 19.2 Q22.6 20.6 21.2 20.6 L1.8 20.6 Q0.4 20.6 0.4 19.2 Z" fill="url(#f255b)"/><path d="M0.4 6 Q0.4 4.9 1.6 4.9 L21.4 4.9 Q22.6 4.9 22.6 6" fill="none" stroke="#a6dcfb" stroke-width="0.5"/></svg>
<div class="t" style="top:526.78px;font-size:24px;line-height:34px;color:#000;letter-spacing:0.35px;left:1346.98px;-webkit-text-stroke:0.18px #000;">同步空间</div>
<div class="t" style="top:526.78px;font-size:24px;line-height:34px;color:#000;letter-spacing:-1.1px;right:673.70px;-webkit-text-stroke:0.18px #000;">DIR</div>
<div class="t" style="top:526.78px;font-size:24px;line-height:34px;color:#000;letter-spacing:0.63px;left:1870.90px;-webkit-text-stroke:0.18px #000;">2022/2/16 22:19</div>
<div class="t" style="top:526.78px;font-size:24px;line-height:34px;color:#000;letter-spacing:0.35px;left:2130.30px;-webkit-text-stroke:0.18px #000;">文件夹</div>
<svg class="b" style="left:1308.7px;top:566.3px;filter:drop-shadow(0 0.9px 0.8px rgba(0,0,0,0.42));overflow:visible;" width="23.0" height="21.9" viewBox="0 0 23 21" preserveAspectRatio="none"><defs><linearGradient id="f260a" x1="0" y1="0" x2="0" y2="1"><stop offset="0" stop-color="#3c92da"/><stop offset="1" stop-color="#56a8e8"/></linearGradient><linearGradient id="f260b" x1="0" y1="0" x2="0" y2="1"><stop offset="0" stop-color="#8dd0f8"/><stop offset="0.78" stop-color="#86caf5"/><stop offset="0.8" stop-color="#7cc2f0"/><stop offset="1" stop-color="#79bfee"/></linearGradient></defs><path d="M0.4 2 Q0.4 0.4 2 0.4 L7.6 0.4 Q8.6 0.4 9.3 1.2 L10.4 2.5 L21 2.5 Q22.6 2.5 22.6 4.1 L22.6 8 L0.4 8 Z" fill="url(#f260a)"/><path d="M0.4 6 Q0.4 4.9 1.6 4.9 L21.4 4.9 Q22.6 4.9 22.6 6 L22.6 19.2 Q22.6 20.6 21.2 20.6 L1.8 20.6 Q0.4 20.6 0.4 19.2 Z" fill="url(#f260b)"/><path d="M0.4 6 Q0.4 4.9 1.6 4.9 L21.4 4.9 Q22.6 4.9 22.6 6" fill="none" stroke="#a6dcfb" stroke-width="0.5"/></svg>
<div class="t" style="top:560.78px;font-size:24px;line-height:34px;color:#000;letter-spacing:0.596px;left:1347.45px;-webkit-text-stroke:0.18px #000;">Adlm</div>
<div class="t" style="top:560.78px;font-size:24px;line-height:34px;color:#000;letter-spacing:-1.1px;right:673.70px;-webkit-text-stroke:0.18px #000;">DIR</div>
<div class="t" style="top:560.78px;font-size:24px;line-height:34px;color:#000;letter-spacing:0.427px;left:1870.90px;-webkit-text-stroke:0.18px #000;">2022/3/14 01:10</div>
<div class="t" style="top:560.78px;font-size:24px;line-height:34px;color:#000;letter-spacing:0.35px;left:2130.30px;-webkit-text-stroke:0.18px #000;">文件夹</div>
<svg class="b" style="left:1308.7px;top:600.3px;filter:drop-shadow(0 0.9px 0.8px rgba(0,0,0,0.42));overflow:visible;" width="23.0" height="21.9" viewBox="0 0 23 21" preserveAspectRatio="none"><defs><linearGradient id="f265a" x1="0" y1="0" x2="0" y2="1"><stop offset="0" stop-color="#3c92da"/><stop offset="1" stop-color="#56a8e8"/></linearGradient><linearGradient id="f265b" x1="0" y1="0" x2="0" y2="1"><stop offset="0" stop-color="#8dd0f8"/><stop offset="0.78" stop-color="#86caf5"/><stop offset="0.8" stop-color="#7cc2f0"/><stop offset="1" stop-color="#79bfee"/></linearGradient></defs><path d="M0.4 2 Q0.4 0.4 2 0.4 L7.6 0.4 Q8.6 0.4 9.3 1.2 L10.4 2.5 L21 2.5 Q22.6 2.5 22.6 4.1 L22.6 8 L0.4 8 Z" fill="url(#f265a)"/><path d="M0.4 6 Q0.4 4.9 1.6 4.9 L21.4 4.9 Q22.6 4.9 22.6 6 L22.6 19.2 Q22.6 20.6 21.2 20.6 L1.8 20.6 Q0.4 20.6 0.4 19.2 Z" fill="url(#f265b)"/><path d="M0.4 6 Q0.4 4.9 1.6 4.9 L21.4 4.9 Q22.6 4.9 22.6 6" fill="none" stroke="#a6dcfb" stroke-width="0.5"/><path d="M11.6 6.6 L8 13.6 M11.6 6.6 L15.2 13.6 M6.6 11.8 L16.6 11.8" stroke="#58a5e3" stroke-width="1.1" fill="none" stroke-linecap="round"/></svg>
<div class="t" style="top:594.78px;font-size:24px;line-height:34px;color:#000;letter-spacing:0.812px;left:1347.45px;-webkit-text-stroke:0.18px #000;">Applications</div>
<div class="t" style="top:594.78px;font-size:24px;line-height:34px;color:#000;letter-spacing:-1.1px;right:673.70px;-webkit-text-stroke:0.18px #000;">DIR</div>
<div class="t" style="top:594.78px;font-size:24px;line-height:34px;color:#000;letter-spacing:0.79px;left:1870.90px;-webkit-text-stroke:0.18px #000;">2022/3/7 01:50</div>
<div class="t" style="top:594.78px;font-size:24px;line-height:34px;color:#000;letter-spacing:0.35px;left:2130.30px;-webkit-text-stroke:0.18px #000;">文件夹</div>
<svg class="b" style="left:1308.7px;top:634.3px;filter:drop-shadow(0 0.9px 0.8px rgba(0,0,0,0.42));overflow:visible;" width="23.0" height="21.9" viewBox="0 0 23 21" preserveAspectRatio="none"><defs><linearGradient id="f270a" x1="0" y1="0" x2="0" y2="1"><stop offset="0" stop-color="#3c92da"/><stop offset="1" stop-color="#56a8e8"/></linearGradient><linearGradient id="f270b" x1="0" y1="0" x2="0" y2="1"><stop offset="0" stop-color="#8dd0f8"/><stop offset="0.78" stop-color="#86caf5"/><stop offset="0.8" stop-color="#7cc2f0"/><stop offset="1" stop-color="#79bfee"/></linearGradient></defs><path d="M0.4 2 Q0.4 0.4 2 0.4 L7.6 0.4 Q8.6 0.4 9.3 1.2 L10.4 2.5 L21 2.5 Q22.6 2.5 22.6 4.1 L22.6 8 L0.4 8 Z" fill="url(#f270a)"/><path d="M0.4 6 Q0.4 4.9 1.6 4.9 L21.4 4.9 Q22.6 4.9 22.6 6 L22.6 19.2 Q22.6 20.6 21.2 20.6 L1.8 20.6 Q0.4 20.6 0.4 19.2 Z" fill="url(#f270b)"/><path d="M0.4 6 Q0.4 4.9 1.6 4.9 L21.4 4.9 Q22.6 4.9 22.6 6" fill="none" stroke="#a6dcfb" stroke-width="0.5"/><rect x="5.6" y="6.4" width="9" height="6" rx="0.6" fill="none" stroke="#58a5e3" stroke-width="1.2"/><path d="M11.2 5.6V15M13.6 5.6V15M7.4 14.8H12.4M9.9 12.6V14.6" stroke="#58a5e3" stroke-width="1.15"/></svg>
<div class="t" style="top:628.78px;font-size:24px;line-height:34px;color:#000;letter-spacing:0.591px;left:1347.45px;-webkit-text-stroke:0.18px #000;">Applications (Parallels)</div>
<div class="t" style="top:628.78px;font-size:24px;line-height:34px;color:#000;letter-spacing:-1.1px;right:673.70px;-webkit-text-stroke:0.18px #000;">DIR</div>
<div class="t" style="top:628.78px;font-size:24px;line-height:34px;color:#000;letter-spacing:0.847px;left:1870.90px;-webkit-text-stroke:0.18px #000;">2022/6/13 20:57</div>
<div class="t" style="top:628.78px;font-size:24px;line-height:34px;color:#000;letter-spacing:0.35px;left:2130.30px;-webkit-text-stroke:0.18px #000;">文件夹</div>
<svg class="b" style="left:1308.7px;top:668.3px;filter:drop-shadow(0 0.9px 0.8px rgba(0,0,0,0.42));overflow:visible;" width="23.0" height="21.9" viewBox="0 0 23 21" preserveAspectRatio="none"><defs><linearGradient id="f275a" x1="0" y1="0" x2="0" y2="1"><stop offset="0" stop-color="#3c92da"/><stop offset="1" stop-color="#56a8e8"/></linearGradient><linearGradient id="f275b" x1="0" y1="0" x2="0" y2="1"><stop offset="0" stop-color="#8dd0f8"/><stop offset="0.78" stop-color="#86caf5"/><stop offset="0.8" stop-color="#7cc2f0"/><stop offset="1" stop-color="#79bfee"/></linearGradient></defs><path d="M0.4 2 Q0.4 0.4 2 0.4 L7.6 0.4 Q8.6 0.4 9.3 1.2 L10.4 2.5 L21 2.5 Q22.6 2.5 22.6 4.1 L22.6 8 L0.4 8 Z" fill="url(#f275a)"/><path d="M0.4 6 Q0.4 4.9 1.6 4.9 L21.4 4.9 Q22.6 4.9 22.6 6 L22.6 19.2 Q22.6 20.6 21.2 20.6 L1.8 20.6 Q0.4 20.6 0.4 19.2 Z" fill="url(#f275b)"/><path d="M0.4 6 Q0.4 4.9 1.6 4.9 L21.4 4.9 Q22.6 4.9 22.6 6" fill="none" stroke="#a6dcfb" stroke-width="0.5"/></svg>
<div class="t" style="top:662.78px;font-size:24px;line-height:34px;color:#000;letter-spacing:0.627px;left:1347.86px;-webkit-text-stroke:0.18px #000;">Creative Cl<span style="letter-spacing:-1.3px">...</span>rchived) (1)</div>
<div class="t" style="top:662.78px;font-size:24px;line-height:34px;color:#000;letter-spacing:-1.1px;right:673.70px;-webkit-text-stroke:0.18px #000;">DIR</div>
<div class="t" style="top:662.78px;font-size:24px;line-height:34px;color:#000;letter-spacing:0.61px;left:1870.90px;-webkit-text-stroke:0.18px #000;">2021/11/29 04:35</div>
<div class="t" style="top:662.78px;font-size:24px;line-height:34px;color:#000;letter-spacing:0.35px;left:2130.30px;-webkit-text-stroke:0.18px #000;">文件夹</div>
<svg class="b" style="left:1308.7px;top:702.3px;filter:drop-shadow(0 0.9px 0.8px rgba(0,0,0,0.42));overflow:visible;" width="23.0" height="21.9" viewBox="0 0 23 21" preserveAspectRatio="none"><defs><linearGradient id="f280a" x1="0" y1="0" x2="0" y2="1"><stop offset="0" stop-color="#3c92da"/><stop offset="1" stop-color="#56a8e8"/></linearGradient><linearGradient id="f280b" x1="0" y1="0" x2="0" y2="1"><stop offset="0" stop-color="#8dd0f8"/><stop offset="0.78" stop-color="#86caf5"/><stop offset="0.8" stop-color="#7cc2f0"/><stop offset="1" stop-color="#79bfee"/></linearGradient></defs><path d="M0.4 2 Q0.4 0.4 2 0.4 L7.6 0.4 Q8.6 0.4 9.3 1.2 L10.4 2.5 L21 2.5 Q22.6 2.5 22.6 4.1 L22.6 8 L0.4 8 Z" fill="url(#f280a)"/><path d="M0.4 6 Q0.4 4.9 1.6 4.9 L21.4 4.9 Q22.6 4.9 22.6 6 L22.6 19.2 Q22.6 20.6 21.2 20.6 L1.8 20.6 Q0.4 20.6 0.4 19.2 Z" fill="url(#f280b)"/><path d="M0.4 6 Q0.4 4.9 1.6 4.9 L21.4 4.9 Q22.6 4.9 22.6 6" fill="none" stroke="#a6dcfb" stroke-width="0.5"/><rect x="5.8" y="6.3" width="11.4" height="7.4" rx="1.2" fill="none" stroke="#58a5e3" stroke-width="1"/><rect x="8.2" y="11" width="6.6" height="1.5" fill="#58a5e3"/></svg>
<div class="t" style="top:696.78px;font-size:24px;line-height:34px;color:#000;letter-spacing:0.881px;left:1347.14px;-webkit-text-stroke:0.18px #000;">Desktop</div>
<div class="t" style="top:696.78px;font-size:24px;line-height:34px;color:#000;letter-spacing:-1.1px;right:673.70px;-webkit-text-stroke:0.18px #000;">DIR</div>
<div class="t" style="top:696.78px;font-size:24px;line-height:34px;color:#000;letter-spacing:0.596px;left:1870.90px;-webkit-text-stroke:0.18px #000;">2022/6/16 10:27</div>
<div class="t" style="top:696.78px;font-size:24px;line-height:34px;color:#000;letter-spacing:0.35px;left:2130.30px;-webkit-text-stroke:0.18px #000;">文件夹</div>
<svg class="b" style="left:1308.7px;top:736.3px;filter:drop-shadow(0 0.9px 0.8px rgba(0,0,0,0.42));overflow:visible;" width="23.0" height="21.9" viewBox="0 0 23 21" preserveAspectRatio="none"><defs><linearGradient id="f285a" x1="0" y1="0" x2="0" y2="1"><stop offset="0" stop-color="#3c92da"/><stop offset="1" stop-color="#56a8e8"/></linearGradient><linearGradient id="f285b" x1="0" y1="0" x2="0" y2="1"><stop offset="0" stop-color="#8dd0f8"/><stop offset="0.78" stop-color="#86caf5"/><stop offset="0.8" stop-color="#7cc2f0"/><stop offset="1" stop-color="#79bfee"/></linearGradient></defs><path d="M0.4 2 Q0.4 0.4 2 0.4 L7.6 0.4 Q8.6 0.4 9.3 1.2 L10.4 2.5 L21 2.5 Q22.6 2.5 22.6 4.1 L22.6 8 L0.4 8 Z" fill="url(#f285a)"/><path d="M0.4 6 Q0.4 4.9 1.6 4.9 L21.4 4.9 Q22.6 4.9 22.6 6 L22.6 19.2 Q22.6 20.6 21.2 20.6 L1.8 20.6 Q0.4 20.6 0.4 19.2 Z" fill="url(#f285b)"/><path d="M0.4 6 Q0.4 4.9 1.6 4.9 L21.4 4.9 Q22.6 4.9 22.6 6" fill="none" stroke="#a6dcfb" stroke-width="0.5"/><path d="M8 6.4 H12.4 L15.2 9.2 V15 H8 Z M12.2 6.6 V9.4 H15" fill="none" stroke="#58a5e3" stroke-width="0.95"/></svg>
<div class="t" style="top:730.78px;font-size:24px;line-height:34px;color:#000;letter-spacing:0.874px;left:1347.14px;-webkit-text-stroke:0.18px #000;">Documents</div>
<div class="t" style="top:730.78px;font-size:24px;line-height:34px;color:#000;letter-spacing:-1.1px;right:673.70px;-webkit-text-stroke:0.18px #000;">DIR</div>
<div class="t" style="top:730.78px;font-size:24px;line-height:34px;color:#000;letter-spacing:1.028px;left:1870.90px;-webkit-text-stroke:0.18px #000;">2022/6/16 03:04</div>
<div class="t" style="top:730.78px;font-size:24px;line-height:34px;color:#000;letter-spacing:0.35px;left:2130.30px;-webkit-text-stroke:0.18px #000;">文件夹</div>
<svg class="b" style="left:1308.7px;top:770.3px;filter:drop-shadow(0 0.9px 0.8px rgba(0,0,0,0.42));overflow:visible;" width="23.0" height="21.9" viewBox="0 0 23 21" preserveAspectRatio="none"><defs><linearGradient id="f290a" x1="0" y1="0" x2="0" y2="1"><stop offset="0" stop-color="#3c92da"/><stop offset="1" stop-color="#56a8e8"/></linearGradient><linearGradient id="f290b" x1="0" y1="0" x2="0" y2="1"><stop offset="0" stop-color="#8dd0f8"/><stop offset="0.78" stop-color="#86caf5"/><stop offset="0.8" stop-color="#7cc2f0"/><stop offset="1" stop-color="#79bfee"/></linearGradient></defs><path d="M0.4 2 Q0.4 0.4 2 0.4 L7.6 0.4 Q8.6 0.4 9.3 1.2 L10.4 2.5 L21 2.5 Q22.6 2.5 22.6 4.1 L22.6 8 L0.4 8 Z" fill="url(#f290a)"/><path d="M0.4 6 Q0.4 4.9 1.6 4.9 L21.4 4.9 Q22.6 4.9 22.6 6 L22.6 19.2 Q22.6 20.6 21.2 20.6 L1.8 20.6 Q0.4 20.6 0.4 19.2 Z" fill="url(#f290b)"/><path d="M0.4 6 Q0.4 4.9 1.6 4.9 L21.4 4.9 Q22.6 4.9 22.6 6" fill="none" stroke="#a6dcfb" stroke-width="0.5"/><circle cx="11.6" cy="10.8" r="4.8" fill="#58a5e3"/><path d="M11.6 8V13M9.6 11.2 L11.6 13.2 L13.6 11.2" stroke="#8ccdf6" stroke-width="1.2" fill="none"/></svg>
<div class="t" style="top:764.78px;font-size:24px;line-height:34px;color:#000;letter-spacing:0.635px;left:1347.14px;-webkit-text-stroke:0.18px #000;">Downloads</div>
<div class="t" style="top:764.78px;font-size:24px;line-height:34px;color:#000;letter-spacing:-1.1px;right:673.70px;-webkit-text-stroke:0.18px #000;">DIR</div>
<div class="t" style="top:764.78px;font-size:24px;line-height:34px;color:#000;letter-spacing:0.737px;left:1870.90px;-webkit-text-stroke:0.18px #000;">2022/6/16 10:58</div>
<div class="t" style="top:764.78px;font-size:24px;line-height:34px;color:#000;letter-spacing:0.35px;left:2130.30px;-webkit-text-stroke:0.18px #000;">文件夹</div>
<svg class="b" style="left:1308.7px;top:804.3px;filter:drop-shadow(0 0.9px 0.8px rgba(0,0,0,0.42));overflow:visible;" width="23.0" height="21.9" viewBox="0 0 23 21" preserveAspectRatio="none"><defs><linearGradient id="f295a" x1="0" y1="0" x2="0" y2="1"><stop offset="0" stop-color="#3c92da"/><stop offset="1" stop-color="#56a8e8"/></linearGradient><linearGradient id="f295b" x1="0" y1="0" x2="0" y2="1"><stop offset="0" stop-color="#8dd0f8"/><stop offset="0.78" stop-color="#86caf5"/><stop offset="0.8" stop-color="#7cc2f0"/><stop offset="1" stop-color="#79bfee"/></linearGradient></defs><path d="M0.4 2 Q0.4 0.4 2 0.4 L7.6 0.4 Q8.6 0.4 9.3 1.2 L10.4 2.5 L21 2.5 Q22.6 2.5 22.6 4.1 L22.6 8 L0.4 8 Z" fill="url(#f295a)"/><path d="M0.4 6 Q0.4 4.9 1.6 4.9 L21.4 4.9 Q22.6 4.9 22.6 6 L22.6 19.2 Q22.6 20.6 21.2 20.6 L1.8 20.6 Q0.4 20.6 0.4 19.2 Z" fill="url(#f295b)"/><path d="M0.4 6 Q0.4 4.9 1.6 4.9 L21.4 4.9 Q22.6 4.9 22.6 6" fill="none" stroke="#a6dcfb" stroke-width="0.5"/></svg>
<div class="t" style="top:798.78px;font-size:24px;line-height:34px;color:#000;letter-spacing:0.65px;left:1347.14px;-webkit-text-stroke:0.18px #000;">FoundryAnalytics</div>
<div class="t" style="top:798.78px;font-size:24px;line-height:34px;color:#000;letter-spacing:-1.1px;right:673.70px;-webkit-text-stroke:0.18px #000;">DIR</div>
<div class="t" style="top:798.78px;font-size:24px;line-height:34px;color:#000;letter-spacing:0.891px;left:1870.90px;-webkit-text-stroke:0.18px #000;">2022/2/15 02:44</div>
<div class="t" style="top:798.78px;font-size:24px;line-height:34px;color:#000;letter-spacing:0.35px;left:2130.30px;-webkit-text-stroke:0.18px #000;">文件夹</div>
<svg class="b" style="left:1308.7px;top:838.3px;filter:drop-shadow(0 0.9px 0.8px rgba(0,0,0,0.42));overflow:visible;" width="23.0" height="21.9" viewBox="0 0 23 21" preserveAspectRatio="none"><defs><linearGradient id="f300a" x1="0" y1="0" x2="0" y2="1"><stop offset="0" stop-color="#3c92da"/><stop offset="1" stop-color="#56a8e8"/></linearGradient><linearGradient id="f300b" x1="0" y1="0" x2="0" y2="1"><stop offset="0" stop-color="#8dd0f8"/><stop offset="0.78" stop-color="#86caf5"/><stop offset="0.8" stop-color="#7cc2f0"/><stop offset="1" stop-color="#79bfee"/></linearGradient></defs><path d="M0.4 2 Q0.4 0.4 2 0.4 L7.6 0.4 Q8.6 0.4 9.3 1.2 L10.4 2.5 L21 2.5 Q22.6 2.5 22.6 4.1 L22.6 8 L0.4 8 Z" fill="url(#f300a)"/><path d="M0.4 6 Q0.4 4.9 1.6 4.9 L21.4 4.9 Q22.6 4.9 22.6 6 L22.6 19.2 Q22.6 20.6 21.2 20.6 L1.8 20.6 Q0.4 20.6 0.4 19.2 Z" fill="url(#f300b)"/><path d="M0.4 6 Q0.4 4.9 1.6 4.9 L21.4 4.9 Q22.6 4.9 22.6 6" fill="none" stroke="#a6dcfb" stroke-width="0.5"/></svg>
<div class="t" style="top:832.78px;font-size:24px;line-height:34px;color:#000;letter-spacing:0.7px;left:1347.59px;-webkit-text-stroke:0.18px #000;"><span style="letter-spacing:0.35px">iCloud</span><span style="letter-spacing:-1.6px"> </span><span class="cj">云盘（归档）</span></div>
<div class="t" style="top:832.78px;font-size:24px;line-height:34px;color:#000;letter-spacing:-1.1px;right:673.70px;-webkit-text-stroke:0.18px #000;">DIR</div>
<div class="t" style="top:832.78px;font-size:24px;line-height:34px;color:#000;letter-spacing:0.51px;left:1870.90px;-webkit-text-stroke:0.18px #000;">2021/11/8 22:39</div>
<div class="t" style="top:832.78px;font-size:24px;line-height:34px;color:#000;letter-spacing:0.35px;left:2130.30px;-webkit-text-stroke:0.18px #000;">文件夹</div>
<svg class="b" style="left:1308.7px;top:872.3px;filter:drop-shadow(0 0.9px 0.8px rgba(0,0,0,0.42));overflow:visible;" width="23.0" height="21.9" viewBox="0 0 23 21" preserveAspectRatio="none"><defs><linearGradient id="f305a" x1="0" y1="0" x2="0" y2="1"><stop offset="0" stop-color="#3c92da"/><stop offset="1" stop-color="#56a8e8"/></linearGradient><linearGradient id="f305b" x1="0" y1="0" x2="0" y2="1"><stop offset="0" stop-color="#8dd0f8"/><stop offset="0.78" stop-color="#86caf5"/><stop offset="0.8" stop-color="#7cc2f0"/><stop offset="1" stop-color="#79bfee"/></linearGradient></defs><path d="M0.4 2 Q0.4 0.4 2 0.4 L7.6 0.4 Q8.6 0.4 9.3 1.2 L10.4 2.5 L21 2.5 Q22.6 2.5 22.6 4.1 L22.6 8 L0.4 8 Z" fill="url(#f305a)"/><path d="M0.4 6 Q0.4 4.9 1.6 4.9 L21.4 4.9 Q22.6 4.9 22.6 6 L22.6 19.2 Q22.6 20.6 21.2 20.6 L1.8 20.6 Q0.4 20.6 0.4 19.2 Z" fill="url(#f305b)"/><path d="M0.4 6 Q0.4 4.9 1.6 4.9 L21.4 4.9 Q22.6 4.9 22.6 6" fill="none" stroke="#a6dcfb" stroke-width="0.5"/><rect x="5.9" y="6" width="11.4" height="8" rx="0.8" fill="none" stroke="#58a5e3" stroke-width="1"/><path d="M8.7 6V14M14.5 6V14M8.7 10H14.5" stroke="#58a5e3" stroke-width="0.95"/></svg>
<div class="t" style="top:866.78px;font-size:24px;line-height:34px;color:#000;letter-spacing:0.553px;left:1347.14px;-webkit-text-stroke:0.18px #000;">Movies</div>
<div class="t" style="top:866.78px;font-size:24px;line-height:34px;color:#000;letter-spacing:-1.1px;right:673.70px;-webkit-text-stroke:0.18px #000;">DIR</div>
<div class="t" style="top:866.78px;font-size:24px;line-height:34px;color:#000;letter-spacing:0.776px;left:1870.90px;-webkit-text-stroke:0.18px #000;">2022/6/4 21:47</div>
<div class="t" style="top:866.78px;font-size:24px;line-height:34px;color:#000;letter-spacing:0.35px;left:2130.30px;-webkit-text-stroke:0.18px #000;">文件夹</div>
<svg class="b" style="left:1308.7px;top:906.3px;filter:drop-shadow(0 0.9px 0.8px rgba(0,0,0,0.42));overflow:visible;" width="23.0" height="21.9" viewBox="0 0 23 21" preserveAspectRatio="none"><defs><linearGradient id="f310a" x1="0" y1="0" x2="0" y2="1"><stop offset="0" stop-color="#3c92da"/><stop offset="1" stop-color="#56a8e8"/></linearGradient><linearGradient id="f310b" x1="0" y1="0" x2="0" y2="1"><stop offset="0" stop-color="#8dd0f8"/><stop offset="0.78" stop-color="#86caf5"/><stop offset="0.8" stop-color="#7cc2f0"/><stop offset="1" stop-color="#79bfee"/></linearGradient></defs><path d="M0.4 2 Q0.4 0.4 2 0.4 L7.6 0.4 Q8.6 0.4 9.3 1.2 L10.4 2.5 L21 2.5 Q22.6 2.5 22.6 4.1 L22.6 8 L0.4 8 Z" fill="url(#f310a)"/><path d="M0.4 6 Q0.4 4.9 1.6 4.9 L21.4 4.9 Q22.6 4.9 22.6 6 L22.6 19.2 Q22.6 20.6 21.2 20.6 L1.8 20.6 Q0.4 20.6 0.4 19.2 Z" fill="url(#f310b)"/><path d="M0.4 6 Q0.4 4.9 1.6 4.9 L21.4 4.9 Q22.6 4.9 22.6 6" fill="none" stroke="#a6dcfb" stroke-width="0.5"/><path d="M9.7 14.4V7.8L14.5 6.6V13.2M9.7 9.4L14.5 8.2" stroke="#58a5e3" stroke-width="1" fill="none"/><ellipse cx="8.5" cy="14.4" rx="1.5" ry="1.2" fill="#58a5e3"/><ellipse cx="13.3" cy="13.2" rx="1.5" ry="1.2" fill="#58a5e3"/></svg>
<div class="t" style="top:900.78px;font-size:24px;line-height:34px;color:#000;letter-spacing:0.835px;left:1347.14px;-webkit-text-stroke:0.18px #000;">Music</div>
<div class="t" style="top:900.78px;font-size:24px;line-height:34px;color:#000;letter-spacing:-1.1px;right:673.70px;-webkit-text-stroke:0.18px #000;">DIR</div>
<div class="t" style="top:900.78px;font-size:24px;line-height:34px;color:#000;letter-spacing:0.864px;left:1870.90px;-webkit-text-stroke:0.18px #000;">2022/5/12 22:48</div>
<div class="t" style="top:900.78px;font-size:24px;line-height:34px;color:#000;letter-spacing:0.35px;left:2130.30px;-webkit-text-stroke:0.18px #000;">文件夹</div>
<svg class="b" style="left:1308.7px;top:940.3px;filter:drop-shadow(0 0.9px 0.8px rgba(0,0,0,0.42));overflow:visible;" width="23.0" height="21.9" viewBox="0 0 23 21" preserveAspectRatio="none"><defs><linearGradient id="f315a" x1="0" y1="0" x2="0" y2="1"><stop offset="0" stop-color="#3c92da"/><stop offset="1" stop-color="#56a8e8"/></linearGradient><linearGradient id="f315b" x1="0" y1="0" x2="0" y2="1"><stop offset="0" stop-color="#8dd0f8"/><stop offset="0.78" stop-color="#86caf5"/><stop offset="0.8" stop-color="#7cc2f0"/><stop offset="1" stop-color="#79bfee"/></linearGradient></defs><path d="M0.4 2 Q0.4 0.4 2 0.4 L7.6 0.4 Q8.6 0.4 9.3 1.2 L10.4 2.5 L21 2.5 Q22.6 2.5 22.6 4.1 L22.6 8 L0.4 8 Z" fill="url(#f315a)"/><path d="M0.4 6 Q0.4 4.9 1.6 4.9 L21.4 4.9 Q22.6 4.9 22.6 6 L22.6 19.2 Q22.6 20.6 21.2 20.6 L1.8 20.6 Q0.4 20.6 0.4 19.2 Z" fill="url(#f315b)"/><path d="M0.4 6 Q0.4 4.9 1.6 4.9 L21.4 4.9 Q22.6 4.9 22.6 6" fill="none" stroke="#a6dcfb" stroke-width="0.5"/></svg>
<div class="t" style="top:934.78px;font-size:24px;line-height:34px;color:#000;letter-spacing:0.293px;left:1347.14px;-webkit-text-stroke:0.18px #000;">Parallels</div>
<div class="t" style="top:934.78px;font-size:24px;line-height:34px;color:#000;letter-spacing:-1.1px;right:673.70px;-webkit-text-stroke:0.18px #000;">DIR</div>
<div class="t" style="top:934.78px;font-size:24px;line-height:34px;color:#000;letter-spacing:0.673px;left:1870.90px;-webkit-text-stroke:0.18px #000;">2022/6/9 18:15</div>
<div class="t" style="top:934.78px;font-size:24px;line-height:34px;color:#000;letter-spacing:0.35px;left:2130.30px;-webkit-text-stroke:0.18px #000;">文件夹</div>
<svg class="b" style="left:1308.7px;top:974.3px;filter:drop-shadow(0 0.9px 0.8px rgba(0,0,0,0.42));overflow:visible;" width="23.0" height="21.9" viewBox="0 0 23 21" preserveAspectRatio="none"><defs><linearGradient id="f320a" x1="0" y1="0" x2="0" y2="1"><stop offset="0" stop-color="#3c92da"/><stop offset="1" stop-color="#56a8e8"/></linearGradient><linearGradient id="f320b" x1="0" y1="0" x2="0" y2="1"><stop offset="0" stop-color="#8dd0f8"/><stop offset="0.78" stop-color="#86caf5"/><stop offset="0.8" stop-color="#7cc2f0"/><stop offset="1" stop-color="#79bfee"/></linearGradient></defs><path d="M0.4 2 Q0.4 0.4 2 0.4 L7.6 0.4 Q8.6 0.4 9.3 1.2 L10.4 2.5 L21 2.5 Q22.6 2.5 22.6 4.1 L22.6 8 L0.4 8 Z" fill="url(#f320a)"/><path d="M0.4 6 Q0.4 4.9 1.6 4.9 L21.4 4.9 Q22.6 4.9 22.6 6 L22.6 19.2 Q22.6 20.6 21.2 20.6 L1.8 20.6 Q0.4 20.6 0.4 19.2 Z" fill="url(#f320b)"/><path d="M0.4 6 Q0.4 4.9 1.6 4.9 L21.4 4.9 Q22.6 4.9 22.6 6" fill="none" stroke="#a6dcfb" stroke-width="0.5"/><rect x="5.9" y="6" width="11.4" height="8" rx="0.8" fill="none" stroke="#58a5e3" stroke-width="1"/><path d="M6.8 13.2 L10 9.6 L12.4 12 L13.8 10.8 L16.4 13.2 Z" fill="#58a5e3"/><circle cx="14.2" cy="8.4" r="0.9" fill="#58a5e3"/></svg>
<div class="t" style="top:968.78px;font-size:24px;line-height:34px;color:#000;letter-spacing:0.844px;left:1347.14px;-webkit-text-stroke:0.18px #000;">Pictures</div>
<div class="t" style="top:968.78px;font-size:24px;line-height:34px;color:#000;letter-spacing:-1.1px;right:673.70px;-webkit-text-stroke:0.18px #000;">DIR</div>
<div class="t" style="top:968.78px;font-size:24px;line-height:34px;color:#000;letter-spacing:0.675px;left:1870.90px;-webkit-text-stroke:0.18px #000;">2022/6/6 19:21</div>
<div class="t" style="top:968.78px;font-size:24px;line-height:34px;color:#000;letter-spacing:0.35px;left:2130.30px;-webkit-text-stroke:0.18px #000;">文件夹</div>
<svg class="b" style="left:1308.7px;top:1008.3px;filter:drop-shadow(0 0.9px 0.8px rgba(0,0,0,0.42));overflow:visible;" width="23.0" height="21.9" viewBox="0 0 23 21" preserveAspectRatio="none"><defs><linearGradient id="f325a" x1="0" y1="0" x2="0" y2="1"><stop offset="0" stop-color="#3c92da"/><stop offset="1" stop-color="#56a8e8"/></linearGradient><linearGradient id="f325b" x1="0" y1="0" x2="0" y2="1"><stop offset="0" stop-color="#8dd0f8"/><stop offset="0.78" stop-color="#86caf5"/><stop offset="0.8" stop-color="#7cc2f0"/><stop offset="1" stop-color="#79bfee"/></linearGradient></defs><path d="M0.4 2 Q0.4 0.4 2 0.4 L7.6 0.4 Q8.6 0.4 9.3 1.2 L10.4 2.5 L21 2.5 Q22.6 2.5 22.6 4.1 L22.6 8 L0.4 8 Z" fill="url(#f325a)"/><path d="M0.4 6 Q0.4 4.9 1.6 4.9 L21.4 4.9 Q22.6 4.9 22.6 6 L22.6 19.2 Q22.6 20.6 21.2 20.6 L1.8 20.6 Q0.4 20.6 0.4 19.2 Z" fill="url(#f325b)"/><path d="M0.4 6 Q0.4 4.9 1.6 4.9 L21.4 4.9 Q22.6 4.9 22.6 6" fill="none" stroke="#a6dcfb" stroke-width="0.5"/></svg>
<div class="t" style="top:1002.78px;font-size:24px;line-height:34px;color:#000;letter-spacing:0.578px;left:1347.14px;-webkit-text-stroke:0.18px #000;">Postman</div>
<div class="t" style="top:1002.78px;font-size:24px;line-height:34px;color:#000;letter-spacing:-1.1px;right:673.70px;-webkit-text-stroke:0.18px #000;">DIR</div>
<div class="t" style="top:1002.78px;font-size:24px;line-height:34px;color:#000;letter-spacing:0.442px;left:1870.90px;-webkit-text-stroke:0.18px #000;">2022/1/4 17:35</div>
<div class="t" style="top:1002.78px;font-size:24px;line-height:34px;color:#000;letter-spacing:0.35px;left:2130.30px;-webkit-text-stroke:0.18px #000;">文件夹</div>
<svg class="b" style="left:1308.7px;top:1042.3px;filter:drop-shadow(0 0.9px 0.8px rgba(0,0,0,0.42));overflow:visible;" width="23.0" height="21.9" viewBox="0 0 23 21" preserveAspectRatio="none"><defs><linearGradient id="f330a" x1="0" y1="0" x2="0" y2="1"><stop offset="0" stop-color="#3c92da"/><stop offset="1" stop-color="#56a8e8"/></linearGradient><linearGradient id="f330b" x1="0" y1="0" x2="0" y2="1"><stop offset="0" stop-color="#8dd0f8"/><stop offset="0.78" stop-color="#86caf5"/><stop offset="0.8" stop-color="#7cc2f0"/><stop offset="1" stop-color="#79bfee"/></linearGradient></defs><path d="M0.4 2 Q0.4 0.4 2 0.4 L7.6 0.4 Q8.6 0.4 9.3 1.2 L10.4 2.5 L21 2.5 Q22.6 2.5 22.6 4.1 L22.6 8 L0.4 8 Z" fill="url(#f330a)"/><path d="M0.4 6 Q0.4 4.9 1.6 4.9 L21.4 4.9 Q22.6 4.9 22.6 6 L22.6 19.2 Q22.6 20.6 21.2 20.6 L1.8 20.6 Q0.4 20.6 0.4 19.2 Z" fill="url(#f330b)"/><path d="M0.4 6 Q0.4 4.9 1.6 4.9 L21.4 4.9 Q22.6 4.9 22.6 6" fill="none" stroke="#a6dcfb" stroke-width="0.5"/><path d="M11.6 5.4 L16.9 10.6 L11.6 15.8 L6.3 10.6 Z" fill="none" stroke="#58a5e3" stroke-width="0.95" stroke-linejoin="round"/><path d="M11.6 13V8.2M9.8 10 L11.6 8.2 L13.4 10" fill="none" stroke="#58a5e3" stroke-width="0.9"/></svg>
<div class="t" style="top:1036.78px;font-size:24px;line-height:34px;color:#000;letter-spacing:0.657px;left:1347.14px;-webkit-text-stroke:0.18px #000;">Public</div>
<div class="t" style="top:1036.78px;font-size:24px;line-height:34px;color:#000;letter-spacing:-1.1px;right:673.70px;-webkit-text-stroke:0.18px #000;">DIR</div>
<div class="t" style="top:1036.78px;font-size:24px;line-height:34px;color:#000;letter-spacing:0.222px;left:1870.90px;-webkit-text-stroke:0.18px #000;">2021/7/26 17:41</div>
<div class="t" style="top:1036.78px;font-size:24px;line-height:34px;color:#000;letter-spacing:0.35px;left:2130.30px;-webkit-text-stroke:0.18px #000;">文件夹</div>
<svg class="b" style="left:1308.7px;top:1076.3px;filter:drop-shadow(0 0.9px 0.8px rgba(0,0,0,0.42));overflow:visible;" width="23.0" height="21.9" viewBox="0 0 23 21" preserveAspectRatio="none"><defs><linearGradient id="f335a" x1="0" y1="0" x2="0" y2="1"><stop offset="0" stop-color="#3c92da"/><stop offset="1" stop-color="#56a8e8"/></linearGradient><linearGradient id="f335b" x1="0" y1="0" x2="0" y2="1"><stop offset="0" stop-color="#8dd0f8"/><stop offset="0.78" stop-color="#86caf5"/><stop offset="0.8" stop-color="#7cc2f0"/><stop offset="1" stop-color="#79bfee"/></linearGradient></defs><path d="M0.4 2 Q0.4 0.4 2 0.4 L7.6 0.4 Q8.6 0.4 9.3 1.2 L10.4 2.5 L21 2.5 Q22.6 2.5 22.6 4.1 L22.6 8 L0.4 8 Z" fill="url(#f335a)"/><path d="M0.4 6 Q0.4 4.9 1.6 4.9 L21.4 4.9 Q22.6 4.9 22.6 6 L22.6 19.2 Q22.6 20.6 21.2 20.6 L1.8 20.6 Q0.4 20.6 0.4 19.2 Z" fill="url(#f335b)"/><path d="M0.4 6 Q0.4 4.9 1.6 4.9 L21.4 4.9 Q22.6 4.9 22.6 6" fill="none" stroke="#a6dcfb" stroke-width="0.5"/></svg>
<div class="t" style="top:1070.78px;font-size:24px;line-height:34px;color:#000;letter-spacing:0.499px;left:1348.18px;-webkit-text-stroke:0.18px #000;">sensors</div>
<div class="t" style="top:1070.78px;font-size:24px;line-height:34px;color:#000;letter-spacing:-1.1px;right:673.70px;-webkit-text-stroke:0.18px #000;">DIR</div>
<div class="t" style="top:1070.78px;font-size:24px;line-height:34px;color:#000;letter-spacing:0.961px;left:1870.90px;-webkit-text-stroke:0.18px #000;">2021/8/9 22:46</div>
<div class="t" style="top:1070.78px;font-size:24px;line-height:34px;color:#000;letter-spacing:0.35px;left:2130.30px;-webkit-text-stroke:0.18px #000;">文件夹</div>
<svg class="b" style="left:1308.7px;top:1110.3px;filter:drop-shadow(0 0.9px 0.8px rgba(0,0,0,0.42));overflow:visible;" width="23.0" height="21.9" viewBox="0 0 23 21" preserveAspectRatio="none"><defs><linearGradient id="f340a" x1="0" y1="0" x2="0" y2="1"><stop offset="0" stop-color="#3c92da"/><stop offset="1" stop-color="#56a8e8"/></linearGradient><linearGradient id="f340b" x1="0" y1="0" x2="0" y2="1"><stop offset="0" stop-color="#8dd0f8"/><stop offset="0.78" stop-color="#86caf5"/><stop offset="0.8" stop-color="#7cc2f0"/><stop offset="1" stop-color="#79bfee"/></linearGradient></defs><path d="M0.4 2 Q0.4 0.4 2 0.4 L7.6 0.4 Q8.6 0.4 9.3 1.2 L10.4 2.5 L21 2.5 Q22.6 2.5 22.6 4.1 L22.6 8 L0.4 8 Z" fill="url(#f340a)"/><path d="M0.4 6 Q0.4 4.9 1.6 4.9 L21.4 4.9 Q22.6 4.9 22.6 6 L22.6 19.2 Q22.6 20.6 21.2 20.6 L1.8 20.6 Q0.4 20.6 0.4 19.2 Z" fill="url(#f340b)"/><path d="M0.4 6 Q0.4 4.9 1.6 4.9 L21.4 4.9 Q22.6 4.9 22.6 6" fill="none" stroke="#a6dcfb" stroke-width="0.5"/></svg>
<div class="t" style="top:1104.78px;font-size:24px;line-height:34px;color:#000;letter-spacing:0.389px;left:1347.73px;-webkit-text-stroke:0.18px #000;">Sunlogin Files</div>
<div class="t" style="top:1104.78px;font-size:24px;line-height:34px;color:#000;letter-spacing:-1.1px;right:673.70px;-webkit-text-stroke:0.18px #000;">DIR</div>
<div class="t" style="top:1104.78px;font-size:24px;line-height:34px;color:#000;letter-spacing:0.961px;left:1870.90px;-webkit-text-stroke:0.18px #000;">2021/8/9 22:46</div>
<div class="t" style="top:1104.78px;font-size:24px;line-height:34px;color:#000;letter-spacing:0.35px;left:2130.30px;-webkit-text-stroke:0.18px #000;">文件夹</div>
<svg class="b" style="left:1308.7px;top:1144.3px;filter:drop-shadow(0 0.9px 0.8px rgba(0,0,0,0.42));overflow:visible;" width="23.0" height="21.9" viewBox="0 0 23 21" preserveAspectRatio="none"><defs><linearGradient id="f345a" x1="0" y1="0" x2="0" y2="1"><stop offset="0" stop-color="#3c92da"/><stop offset="1" stop-color="#56a8e8"/></linearGradient><linearGradient id="f345b" x1="0" y1="0" x2="0" y2="1"><stop offset="0" stop-color="#8dd0f8"/><stop offset="0.78" stop-color="#86caf5"/><stop offset="0.8" stop-color="#7cc2f0"/><stop offset="1" stop-color="#79bfee"/></linearGradient></defs><path d="M0.4 2 Q0.4 0.4 2 0.4 L7.6 0.4 Q8.6 0.4 9.3 1.2 L10.4 2.5 L21 2.5 Q22.6 2.5 22.6 4.1 L22.6 8 L0.4 8 Z" fill="url(#f345a)"/><path d="M0.4 6 Q0.4 4.9 1.6 4.9 L21.4 4.9 Q22.6 4.9 22.6 6 L22.6 19.2 Q22.6 20.6 21.2 20.6 L1.8 20.6 Q0.4 20.6 0.4 19.2 Z" fill="url(#f345b)"/><path d="M0.4 6 Q0.4 4.9 1.6 4.9 L21.4 4.9 Q22.6 4.9 22.6 6" fill="none" stroke="#a6dcfb" stroke-width="0.5"/></svg>
<div class="t" style="top:1138.78px;font-size:24px;line-height:34px;color:#000;letter-spacing:0.321px;left:1348.39px;-webkit-text-stroke:0.18px #000;">Topaz Labs LLC</div>
<div class="t" style="top:1138.78px;font-size:24px;line-height:34px;color:#000;letter-spacing:-1.1px;right:673.70px;-webkit-text-stroke:0.18px #000;">DIR</div>
<div class="t" style="top:1138.78px;font-size:24px;line-height:34px;color:#000;letter-spacing:0.561px;left:1870.90px;-webkit-text-stroke:0.18px #000;">2022/3/16 20:17</div>
<div class="t" style="top:1138.78px;font-size:24px;line-height:34px;color:#000;letter-spacing:0.35px;left:2130.30px;-webkit-text-stroke:0.18px #000;">文件夹</div>
<svg class="b" style="left:1308.7px;top:1178.3px;filter:drop-shadow(0 0.9px 0.8px rgba(0,0,0,0.42));overflow:visible;" width="23.0" height="21.9" viewBox="0 0 23 21" preserveAspectRatio="none"><defs><linearGradient id="f350a" x1="0" y1="0" x2="0" y2="1"><stop offset="0" stop-color="#3c92da"/><stop offset="1" stop-color="#56a8e8"/></linearGradient><linearGradient id="f350b" x1="0" y1="0" x2="0" y2="1"><stop offset="0" stop-color="#8dd0f8"/><stop offset="0.78" stop-color="#86caf5"/><stop offset="0.8" stop-color="#7cc2f0"/><stop offset="1" stop-color="#79bfee"/></linearGradient></defs><path d="M0.4 2 Q0.4 0.4 2 0.4 L7.6 0.4 Q8.6 0.4 9.3 1.2 L10.4 2.5 L21 2.5 Q22.6 2.5 22.6 4.1 L22.6 8 L0.4 8 Z" fill="url(#f350a)"/><path d="M0.4 6 Q0.4 4.9 1.6 4.9 L21.4 4.9 Q22.6 4.9 22.6 6 L22.6 19.2 Q22.6 20.6 21.2 20.6 L1.8 20.6 Q0.4 20.6 0.4 19.2 Z" fill="url(#f350b)"/><path d="M0.4 6 Q0.4 4.9 1.6 4.9 L21.4 4.9 Q22.6 4.9 22.6 6" fill="none" stroke="#a6dcfb" stroke-width="0.5"/></svg>
<div class="t" style="top:1172.78px;font-size:24px;line-height:34px;color:#000;letter-spacing:0.465px;left:1347.39px;-webkit-text-stroke:0.18px #000;">Users</div>
<div class="t" style="top:1172.78px;font-size:24px;line-height:34px;color:#000;letter-spacing:-1.1px;right:673.70px;-webkit-text-stroke:0.18px #000;">DIR</div>
<div class="t" style="top:1172.78px;font-size:24px;line-height:34px;color:#000;letter-spacing:0.713px;left:1870.90px;-webkit-text-stroke:0.18px #000;">2022/2/14 23:51</div>
<div class="t" style="top:1172.78px;font-size:24px;line-height:34px;color:#000;letter-spacing:0.35px;left:2130.30px;-webkit-text-stroke:0.18px #000;">文件夹</div>
<svg class="b" style="left:1310px;top:1211.2px;filter:drop-shadow(0 0.7px 0.6px rgba(0,0,0,0.22));overflow:visible;" width="20.2" height="23.6" viewBox="0 0 20.2 23.6" preserveAspectRatio="none"><defs><linearGradient id="dg355" x1="0" y1="0" x2="0" y2="1"><stop offset="0" stop-color="#fbe35a"/><stop offset="0.55" stop-color="#f5a93c"/><stop offset="1" stop-color="#ea5c4c"/></linearGradient></defs><path d="M1.4 0.6 H12 L19.4 7.6 V22.4 Q19.4 23 18.8 23 H1.4 Q0.8 23 0.8 22.4 V1.2 Q0.8 0.6 1.4 0.6 Z" fill="#f5f5f5" stroke="#e3e3e3" stroke-width="0.7"/><path d="M2.6 2.4 H11.6 V8 H17.8 V21.2 H2.6 Z" fill="#f0f0f0" opacity="0.7"/><path d="M12 0.8 V7.6 H19.2 Z" fill="#fcfcfc" stroke="#d2d2d2" stroke-width="0.6"/><circle cx="10" cy="12.8" r="3.8" fill="none" stroke="#86bdea" stroke-width="2.7"/><circle cx="10" cy="12.8" r="5.3" fill="none" stroke="#98c9ef" stroke-width="1.2" stroke-dasharray="2 1.4"/><path d="M7.4 8 Q3.4 12.6 7.4 17.6 Q4.6 12.8 7.4 8 Z" fill="url(#dg355)" stroke="url(#dg355)" stroke-width="1.9" stroke-linejoin="round" opacity="0.9"/><path d="M6.8 8.2 Q9.4 6.6 12.2 6.8 L12 3.4" fill="none" stroke="#8a94a6" stroke-width="0.9"/></svg>
<div class="t" style="top:1206.78px;font-size:24px;line-height:34px;color:#000;letter-spacing:0.414px;left:1347.87px;-webkit-text-stroke:0.18px #000;">apolloOne</div>
<div class="t" style="top:1206.78px;font-size:24px;line-height:34px;color:#000;letter-spacing:1.5px;left:1660.00px;-webkit-text-stroke:0.18px #000;">db</div>
<div class="t" style="top:1206.78px;font-size:24px;line-height:34px;color:#000;letter-spacing:0.5px;right:672.10px;-webkit-text-stroke:0.18px #000;">86 KB</div>
<div class="t" style="top:1206.78px;font-size:24px;line-height:34px;color:#000;letter-spacing:0.697px;left:1870.90px;-webkit-text-stroke:0.18px #000;">2022/6/10 01:00</div>
<div class="b" style="left:1261px;top:1240px;width:1047px;height:1.2px;background:#dadada;"></div>
<div class="b" style="left:1261px;top:1241px;width:1047px;height:37px;background:#fff;"></div>
<div class="t" style="top:1247.18px;font-size:22px;line-height:29px;color:#2c2c2c;letter-spacing:0.62px;left:1183.60px;width:1200px;text-align:center;-webkit-text-stroke:0.15px #2c2c2c;">0 <span class="cj">字节</span> / 3 MB in 0 / 2 file(s). 0 / 21 dir(s)</div>
<div class="b" style="left:1259px;top:251px;width:2px;height:1028px;background:#dbd6d1;"></div>
<div class="b" style="left:212px;top:1278px;width:2096px;height:2px;background:#b4b4b4;"></div>
<div class="b" style="left:212px;top:1280px;width:2096px;height:58px;background:linear-gradient(#fcfcfc,#f1f1f1);"></div>
<div class="t" style="top:1294.64px;font-size:25px;line-height:32px;color:#262626;letter-spacing:1.08px;left:-213.93px;width:1200px;text-align:center;-webkit-text-stroke:0.2px #262626;">View - F3</div>
<div class="b" style="left:559.75px;top:1280px;width:2px;height:58px;background:#aeaeae;"></div>
<div class="t" style="top:1294.64px;font-size:25px;line-height:32px;color:#262626;letter-spacing:1.08px;left:134.83px;width:1200px;text-align:center;-webkit-text-stroke:0.2px #262626;">Edit - F4</div>
<div class="b" style="left:908.5px;top:1280px;width:2px;height:58px;background:#aeaeae;"></div>
<div class="t" style="top:1294.64px;font-size:25px;line-height:32px;color:#262626;letter-spacing:1.08px;left:484.45px;width:1200px;text-align:center;-webkit-text-stroke:0.2px #262626;">Copy - F5</div>
<div class="b" style="left:1259px;top:1280px;width:2px;height:58px;background:#aeaeae;"></div>
<div class="t" style="top:1294.64px;font-size:25px;line-height:32px;color:#262626;letter-spacing:1.08px;left:834.58px;width:1200px;text-align:center;-webkit-text-stroke:0.2px #262626;">Move - F6</div>
<div class="b" style="left:1608.75px;top:1280px;width:2px;height:58px;background:#aeaeae;"></div>
<div class="t" style="top:1294.64px;font-size:25px;line-height:32px;color:#262626;letter-spacing:1.08px;left:1183.70px;width:1200px;text-align:center;-webkit-text-stroke:0.2px #262626;">New Folder - F7</div>
<div class="b" style="left:1957.25px;top:1280px;width:2px;height:58px;background:#aeaeae;"></div>
<div class="t" style="top:1294.64px;font-size:25px;line-height:32px;color:#262626;letter-spacing:1.08px;left:1532.82px;width:1200px;text-align:center;-webkit-text-stroke:0.2px #262626;">Delete - F8</div>
</div></body></html>
